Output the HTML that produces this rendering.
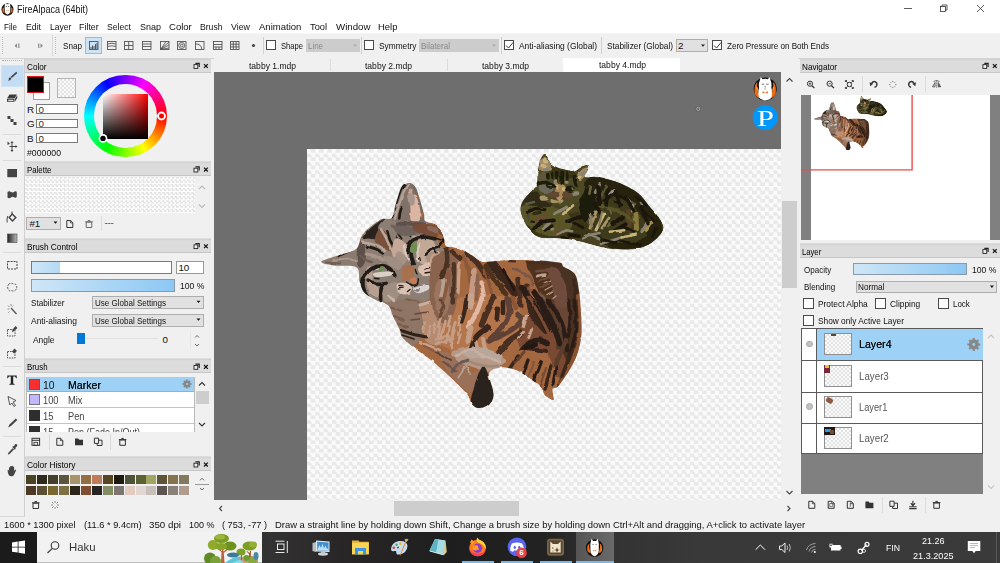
<!DOCTYPE html>
<html><head><meta charset="utf-8"><title>FireAlpaca (64bit)</title>
<style>
html,body{margin:0;padding:0;}
body{width:1000px;height:563px;overflow:hidden;position:relative;background:#f0f0f0;font-family:"Liberation Sans",sans-serif;font-size:9px;color:#000;}
.a{position:absolute;}
.t{position:absolute;white-space:nowrap;line-height:12px;height:12px;font-size:9.800px;letter-spacing:-0.300px;color:#111;}
.hd{position:absolute;height:13px;background:#dcdcdc;border-top:1px solid #dadada;border-bottom:1px solid #c6c6c6;box-sizing:border-box;box-shadow:0 -1.700px 0 0 #d3d3d3;}
.hd span{position:absolute;left:2px;top:0px;line-height:11px;font-size:9.800px;letter-spacing:-0.300px;white-space:nowrap;}
.cb{position:absolute;width:10px;height:10px;border:1px solid #4a4a4a;background:#fff;box-sizing:border-box;}
.inp{position:absolute;background:#fff;border:1px solid #7a7a7a;box-sizing:border-box;}
.dd{position:absolute;background:#e1e1e1;border:1px solid #adadad;box-sizing:border-box;}
.sep{position:absolute;width:1px;background:#d0d0d0;}
svg{position:absolute;overflow:visible;}
.chk{background:conic-gradient(#e2e2e2 25%,#fbfbfb 0 50%,#e2e2e2 0 75%,#fbfbfb 0) 0 0/4px 4px;}
.chk3{background:conic-gradient(#e2e2e2 25%,#fff 0 50%,#e2e2e2 0 75%,#fff 0) 0 0/4.170px 4.170px;}
.chk2{background:conic-gradient(#e9e9e9 25%,#fafafa 0 50%,#e9e9e9 0 75%,#fafafa 0) 0 0/8.330px 8.330px;}
</style></head><body>
<!-- title bar -->
<div class="a" style="left:0;top:0;width:1000px;height:33px;background:#fff"></div>
<svg style="left:1px;top:1.500px" width="13" height="14" viewBox="0 0 13 14"><ellipse cx="6.5" cy="7.5" rx="6" ry="6.2" fill="#1a1a1a"/><path d="M1.5 10 Q1 5 3 6 Q2.5 9 4 11Z M11.5 10 Q12 5 10 6 Q10.5 9 9 11Z" fill="#e8641b"/><path d="M4 2.5 L4.6 .6 L5.6 2.2 L7.4 2.2 L8.4 .6 L9 2.5 Q9.6 4 9.3 7 Q9.6 12 6.5 12.6 Q3.4 12 3.7 7 Q3.4 4 4 2.5Z" fill="#fff"/><circle cx="5.4" cy="4.6" r=".5" fill="#222"/><circle cx="7.6" cy="4.6" r=".5" fill="#222"/><path d="M5.4 8.2 L7.6 9.4 L7.6 8.2 L5.4 9.4Z" fill="#e8641b"/></svg>
<div class="t" style="left:17px;top:3.600px;font-size:10px;letter-spacing:0;transform-origin:0 50%;transform:scaleX(0.900)">FireAlpaca (64bit)</div>
<svg style="left:900px;top:0" width="100" height="18" viewBox="0 0 100 18"><g fill="none" stroke="#333" stroke-width="0.8"><path d="M4 8.5H12"/><rect x="40.5" y="6.5" width="5" height="5"/><path d="M42 6.5V5H47V10H45.5"/><path d="M77 5L84 12M84 5L77 12"/></g></svg>
<!-- menu bar -->
<div id="menu">
<div class="t" style="left:4px;top:20.500px;letter-spacing:0;transform-origin:0 50%;transform:scaleX(0.823)">File</div>
<div class="t" style="left:26px;top:20.500px;letter-spacing:0;transform-origin:0 50%;transform:scaleX(0.888)">Edit</div>
<div class="t" style="left:50px;top:20.500px;letter-spacing:0;transform-origin:0 50%;transform:scaleX(0.873)">Layer</div>
<div class="t" style="left:79px;top:20.500px;letter-spacing:0;transform-origin:0 50%;transform:scaleX(0.909)">Filter</div>
<div class="t" style="left:107px;top:20.500px;letter-spacing:0;transform-origin:0 50%;transform:scaleX(0.881)">Select</div>
<div class="t" style="left:140px;top:20.500px;letter-spacing:0;transform-origin:0 50%;transform:scaleX(0.917)">Snap</div>
<div class="t" style="left:169px;top:20.500px;letter-spacing:0;transform-origin:0 50%;transform:scaleX(0.973)">Color</div>
<div class="t" style="left:200px;top:20.500px;letter-spacing:0;transform-origin:0 50%;transform:scaleX(0.879)">Brush</div>
<div class="t" style="left:231px;top:20.500px;letter-spacing:0;transform-origin:0 50%;transform:scaleX(0.902)">View</div>
<div class="t" style="left:259px;top:20.500px;letter-spacing:0;transform-origin:0 50%;transform:scaleX(0.973)">Animation</div>
<div class="t" style="left:310px;top:20.500px;letter-spacing:0;transform-origin:0 50%;transform:scaleX(0.945)">Tool</div>
<div class="t" style="left:336px;top:20.500px;letter-spacing:0;transform-origin:0 50%;transform:scaleX(0.990)">Window</div>
<div class="t" style="left:378px;top:20.500px;letter-spacing:0;transform-origin:0 50%;transform:scaleX(0.967)">Help</div>
</div>
<!-- toolbar -->
<div class="a" style="left:0;top:33px;width:1000px;height:24px;background:#f0f0f0;border-bottom:1px solid #d6d6d6;border-top:1px solid #f6f6f6;box-sizing:content-box"></div>
<div class="a" style="left:52px;top:35px;width:1px;height:21px;background:#d8d8d8"></div>
<div class="a" style="left:2px;top:37px;width:1px;height:17px;border-left:1px dotted #bbb"></div>
<div class="a" style="left:55px;top:37px;width:1px;height:17px;border-left:1px dotted #bbb"></div>
<svg style="left:0;top:34px" width="520" height="23" viewBox="0 0 520 23">
<g fill="#8a8a8a"><path d="M17 9.5L14.5 11.7L17 14Z M18.2 9.5h1.2v4.5h-1.2z"/><path d="M40.5 9.5L43 11.7L40.5 14Z M38.1 9.5h1.2v4.5h-1.2z"/></g>
<rect x="85.500" y="3.500" width="16" height="16" fill="#cce4f7" stroke="#8cc0ea"/>
<g fill="none" stroke="#555" stroke-width="0.9">
<rect x="89.500" y="7.500" width="8.5" height="8"/>
<rect x="107.500" y="7.500" width="8.500" height="8"/><path d="M107.500 10Q112 8.500 116 10M107.500 12.500Q112 11 116 12.500"/>
<rect x="124.500" y="7.500" width="8.500" height="8"/><path d="M128.700 7.500V15.500M124.500 11.500H133"/>
<rect x="142.500" y="7.500" width="8.500" height="8"/><path d="M142.500 10H151M142.500 12.500H151"/>
<rect x="160.500" y="7.500" width="8.500" height="8"/><path d="M160.500 15.500L169 8M160.500 15.500L169 11M160.500 15.500L166 7.500M160.500 15.500L169 14"/>
<rect x="177.500" y="7.500" width="8.500" height="8"/><circle cx="181.700" cy="11.500" r="3"/><circle cx="181.700" cy="11.500" r="1.300"/>
<rect x="195.500" y="7.500" width="8.500" height="8"/><path d="M195.500 10Q201 9.500 202 15.500"/>
<rect x="213.500" y="7.500" width="8.500" height="8"/><path d="M213.500 10.500H222M213.500 13H222M216 13V15.500M219 13V15.500"/>
<rect x="230.500" y="7.500" width="8.500" height="8"/><path d="M233.300 7.500V15.500M236.100 7.500V15.500M230.500 10.200H239M230.500 12.900H239"/>
</g>
<path d="M91 15V13M92.500 15V11.500M94 15V12M95.500 15V10M97 15V9" stroke="#444" stroke-width="0.9"/>
<circle cx="253.500" cy="11.500" r="1.600" fill="#444"/>
</svg>
<div class="t" style="left:63px;top:40px;letter-spacing:0;transform-origin:0 50%;transform:scaleX(0.830)">Snap</div>
<div class="sep" style="left:263px;top:37px;height:17px"></div>
<div class="cb" style="left:266px;top:40px"></div>
<div class="t" style="left:281px;top:40px;letter-spacing:0;transform-origin:0 50%;transform:scaleX(0.776)">Shape</div>
<div class="dd" style="left:306px;top:39px;width:54px;height:13px;background:#ccc;border-color:#ccc"></div>
<div class="t" style="left:308px;top:40px;color:#8a8a8a;letter-spacing:0;transform-origin:0 50%;transform:scaleX(0.809)">Line</div>
<div class="sep" style="left:361px;top:37px;height:17px"></div>
<div class="cb" style="left:364px;top:40px"></div>
<div class="t" style="left:379px;top:40px;letter-spacing:0;transform-origin:0 50%;transform:scaleX(0.850)">Symmetry</div>
<div class="dd" style="left:419px;top:39px;width:80px;height:13px;background:#ccc;border-color:#ccc"></div>
<div class="t" style="left:421px;top:40px;color:#8a8a8a;letter-spacing:0;transform-origin:0 50%;transform:scaleX(0.819)">Bilateral</div>
<div class="sep" style="left:501px;top:37px;height:17px"></div>
<div class="cb" style="left:504px;top:40px"></div>
<div class="t" style="left:519px;top:40px;letter-spacing:0;transform-origin:0 50%;transform:scaleX(0.858)">Anti-aliasing (Global)</div>
<div class="sep" style="left:601px;top:37px;height:17px"></div>
<div class="t" style="left:607px;top:40px;letter-spacing:0;transform-origin:0 50%;transform:scaleX(0.848)">Stabilizer (Global)</div>
<div class="dd" style="left:676px;top:39px;width:32px;height:13px"></div>
<div class="t" style="left:678px;top:40px">2</div>
<div class="cb" style="left:712px;top:40px"></div>
<div class="t" style="left:727px;top:40px;letter-spacing:0;transform-origin:0 50%;transform:scaleX(0.825)">Zero Pressure on Both Ends</div>
<svg style="left:0;top:34px" width="1000" height="23" viewBox="0 0 1000 23"><g fill="none" stroke="#222" stroke-width="0.9"><path d="M506 11.500L508.500 14L513 8.500"/><path d="M714 11.500L716.500 14L721 8.500"/></g><g fill="#555"><path d="M353 10.500h4l-2 2.200z" fill="#aaa"/><path d="M492 10.500h4l-2 2.200z" fill="#aaa"/><path d="M701 10.500h4l-2 2.200z" fill="#222"/></g></svg>
<!-- left tool column -->
<div class="a" style="left:2px;top:60px;width:20px;height:0;border-top:1px dotted #b4b4b4"></div>
<div class="a" style="left:24px;top:58px;width:1px;height:458px;background:#cfcfcf"></div>
<div class="a" style="left:0;top:515.500px;width:25px;height:1px;background:#d8d8d8"></div>
<div class="a" style="left:1px;top:65px;width:23px;height:22px;background:#c3ddf4;border:1px solid #cde4f7;box-sizing:border-box"></div>
<div class="a" style="left:3px;top:159.500px;width:18px;height:1px;background:#dcdcdc"></div>
<div class="a" style="left:3px;top:133.500px;width:18px;height:1px;background:#dcdcdc"></div>
<div class="a" style="left:3px;top:252px;width:18px;height:1px;background:#dcdcdc"></div>
<div class="a" style="left:3px;top:366px;width:18px;height:1px;background:#dcdcdc"></div>
<div class="a" style="left:3px;top:436px;width:18px;height:1px;background:#dcdcdc"></div>
<svg id="tools" style="left:0;top:0" width="25" height="520" viewBox="0 0 25 520">
<g fill="#444" stroke="none">
<!-- brush -->
<path d="M16.300 71.800L17.300 72.900L11.800 78L10.700 76.800Z"/><path d="M10.300 77.200L11.400 78.400Q10.600 80.600 8 80.700Q9.300 79.300 8.800 78.200Q9.300 77.300 10.300 77.200Z"/>
<!-- eraser -->
<path d="M9.500 94.500H17L14.500 98.500H7Z M7 99H14.500V101.800H7Z M15 98.700L17.300 95.200V98L15 101.500Z" fill="#3c3c3c"/><path d="M8.200 99.800H13.300V100.900H8.200Z" fill="#f0f0f0"/>
<!-- dot tool -->
<path d="M7.500 116h3v3h-3z M10.500 119h3v3h-3z M13.500 122h3v3h-3z"/>
<!-- move -->
<path d="M12 141L13.600 143H12.500V146H15.500V144.9L17.500 146.5L15.500 148.1V147H12.500V150H13.600L12 152L10.400 150H11.500V147H9.500V146H11.500V143H10.400ZM7.500 141.5L10 143.7L7.500 145Z"/>
<!-- fill rect -->
<rect x="7.300" y="169" width="9.700" height="8.200"/>
<!-- bucket -->
<path d="M7.500 192Q9 190.500 11 192Q13 193 14.500 191.500Q16.500 190.500 16.800 192.500V196.500Q16 198.500 14.500 197.500Q12.500 196 11 197.500Q9 199 7.500 197.500Z"/>
<!-- select pen -->
<path d="M12.200 213L16.800 217.600L12.500 222L8.200 217.600Z M12.200 215L10.200 217.600L12.500 220L14.800 217.600Z" fill-rule="evenodd"/><path d="M12 211.500V215M7.800 216Q6.500 219 7.200 222.500" stroke="#444" stroke-width="1" fill="none"/>
<!-- T -->
<path d="M7.300 375.500H16.700V378.200H16Q15.800 376.700 14.600 376.600H13.200V383.300Q13.300 384 14.600 384.100V384.800H9.400V384.100Q10.700 384 10.800 383.300V376.600H9.400Q8.200 376.700 8 378.200H7.300Z" fill="#222"/>
<!-- pen -->
<path d="M15.800 418.500L17.300 420L11 426L8 427.500L9.500 424.500Z"/>
<!-- eyedropper -->
<path d="M15 444.300Q16.300 443.500 17 444.500Q17.700 445.500 16.800 446.500L15.200 448L15.800 448.700L14.800 449.700L12.300 447L13.300 446L13.900 446.600Z M12.600 448.200L14 449.600L9.500 454L7.800 454.800L8.400 452.800Z"/>
<!-- hand -->
<path d="M9 470.500V467.500Q9.600 466.800 10.200 467.500V466.300Q10.900 465.600 11.500 466.300V466Q12.200 465.400 12.800 466V466.800Q13.500 466.200 14.100 466.900V471Q14.700 469.500 15.800 469.500Q16.500 469.800 16 470.600L14.200 474.500Q13.500 476.300 12 476.300H10.800Q9.200 476.300 8.300 474Q7.600 472 7.600 470Q8.300 469.300 9 470.500Z"/>
</g>
<!-- gradient tool -->
<defs><linearGradient id="gt" x1="0" x2="1"><stop offset="0" stop-color="#222"/><stop offset="1" stop-color="#bbb"/></linearGradient></defs>
<rect x="7.500" y="234" width="9.500" height="8.500" fill="url(#gt)" stroke="#444" stroke-width=".6"/>
<g fill="none" stroke="#444" stroke-width="1">
<rect x="7.500" y="261.500" width="9.500" height="7.500" stroke-dasharray="2 1"/>
<path d="M9 284Q7 286 8 289Q9 291.500 11 290.500Q13 291.500 15 290.500Q17.500 289 16.500 286Q16 283.500 13.500 284Q11 282.500 9 284Z" stroke-dasharray="2 1.200" stroke="#555"/>
<path d="M11 308L16.500 314" stroke-width="1.300" stroke="#555"/><path d="M8 305.500L9.500 307M11 304V306M13.500 305.500L12.300 306.800M7.500 309H9.300M9.500 311.500L8.300 312.700" stroke="#777" stroke-width=".8"/>
<rect x="7.500" y="329.500" width="7.500" height="6.500" stroke-dasharray="1.600 1" stroke="#555"/>
<rect x="7.500" y="351.500" width="7.500" height="6.500" stroke-dasharray="1.600 1" stroke="#555"/>
<path d="M8 396.500L16 400.500L13 402L15.500 405.500L14 406.500L11.800 403L9.800 405Z" stroke-width=".9"/>
</g>
<path d="M15.500 326L17.500 328L13.500 331.500L12 332L12.300 330Z" fill="#444"/>
<path d="M14.500 348.500L17 351L14 353.500L12 351.500Z" fill="#444"/>
</svg>
<!-- Color panel -->
<div class="hd" style="left:25px;top:59.500px;width:185.600px"><span style="letter-spacing:0;transform-origin:0 50%;transform:scaleX(0.833)">Color</span></div>
<div class="a" style="left:33px;top:82px;width:17px;height:18px;background:#fff;border:1px solid #a0a0a0;box-sizing:border-box"></div>
<div class="a" style="left:26.500px;top:76px;width:17.500px;height:17px;background:#000;border:1px solid #e81515;box-sizing:border-box"></div>
<div class="a chk" style="left:56.500px;top:78px;width:19.500px;height:20px;border:1px solid #b4b4b4;box-sizing:border-box"></div>
<div class="t" style="left:27px;top:104px">R</div><div class="inp" style="left:36px;top:104.300px;width:42px;height:9.600px"></div><div class="t" style="left:38.500px;top:104px;color:#333">0</div>
<div class="t" style="left:27px;top:118px">G</div><div class="inp" style="left:36px;top:118.800px;width:42px;height:9.600px"></div><div class="t" style="left:38.500px;top:118px;color:#333">0</div>
<div class="t" style="left:27px;top:132.500px">B</div><div class="inp" style="left:36px;top:133.200px;width:42px;height:9.600px"></div><div class="t" style="left:38.500px;top:132.500px;color:#333">0</div>
<div class="t" style="left:27px;top:146.500px;letter-spacing:0;transform-origin:0 50%;transform:scaleX(0.891)">#000000</div>
<div class="a" style="left:84px;top:74.700px;width:82.600px;height:82.600px;border-radius:50%;background:conic-gradient(from 90deg,#f00,#ff0,#0f0,#0ff,#00f,#f0f,#f00)"></div>
<div class="a" style="left:93.700px;top:84.400px;width:63.200px;height:63.200px;border-radius:50%;background:#f0f0f0"></div>
<div class="a" style="left:103px;top:94px;width:44.600px;height:45px;background:linear-gradient(to top,#000,rgba(0,0,0,0)),linear-gradient(to right,#fff,#f00)"></div>
<!-- Palette -->
<div class="hd" style="left:25px;top:163px;width:185.600px"><span style="letter-spacing:0;transform-origin:0 50%;transform:scaleX(0.803)">Palette</span></div>
<div class="a chk3" style="left:25px;top:177.300px;width:170px;height:36px"></div>
<div class="dd" style="left:26.200px;top:216.800px;width:34.500px;height:13px"></div>
<div class="t" style="left:29.500px;top:217.500px">#1</div>
<div class="sep" style="left:101px;top:216px;height:15px;background:#dcdcdc"></div>
<div class="t" style="left:104.500px;top:217px;color:#444">---</div>
<!-- Brush Control -->
<div class="hd" style="left:25px;top:239.700px;width:185.600px"><span style="letter-spacing:0;transform-origin:0 50%;transform:scaleX(0.843)">Brush Control</span></div>
<div class="inp" style="left:31px;top:261px;width:141px;height:13px;border-color:#7a7a7a"><div class="a" style="left:0;top:0;width:28px;height:100%;background:linear-gradient(to right,#cfe6f7,#b4d9f5)"></div></div>
<div class="inp" style="left:176px;top:261.300px;width:28px;height:12.500px;border-color:#9a9a9a"></div>
<div class="t" style="left:178.500px;top:262px">10</div>
<div class="inp" style="left:31px;top:279.200px;width:144px;height:12.400px;border-color:#8a9aa8;background:linear-gradient(to right,#cfe6f7,#8cc8f4)"></div>
<div class="t" style="left:179.500px;top:280px;letter-spacing:0;transform-origin:0 50%;transform:scaleX(0.882)">100 %</div>
<div class="t" style="left:31.300px;top:297px;letter-spacing:0;transform-origin:0 50%;transform:scaleX(0.831)">Stabilizer</div>
<div class="dd" style="left:92px;top:296.400px;width:112px;height:12.500px"></div>
<div class="t" style="left:94.500px;top:296.800px;letter-spacing:0;transform-origin:0 50%;transform:scaleX(0.820)">Use Global Settings</div>
<div class="t" style="left:31.300px;top:314.700px;letter-spacing:0;transform-origin:0 50%;transform:scaleX(0.862)">Anti-aliasing</div>
<div class="dd" style="left:92px;top:314px;width:112px;height:12.500px"></div>
<div class="t" style="left:94.500px;top:314.500px;letter-spacing:0;transform-origin:0 50%;transform:scaleX(0.820)">Use Global Settings</div>
<div class="t" style="left:32.600px;top:333.500px;letter-spacing:0;transform-origin:0 50%;transform:scaleX(0.858)">Angle</div>
<div class="a" style="left:85px;top:337.800px;width:73px;height:1.500px;background:#e2e2e2"></div>
<div class="a" style="left:77px;top:333.200px;width:8px;height:11.200px;background:#0078d7"></div>
<div class="t" style="left:162.600px;top:333.500px">0</div>
<div class="a" style="left:190px;top:331px;width:1px;height:18px;background:#e6e6e6"></div>
<!-- Brush -->
<div class="hd" style="left:25px;top:360.300px;width:185.600px"><span style="letter-spacing:0;transform-origin:0 50%;transform:scaleX(0.801)">Brush</span></div>
<div class="a" style="left:25.500px;top:376.500px;width:169px;height:55.300px;background:#fff;overflow:hidden;border-left:1px solid #b8b8b8;border-right:1px solid #b8b8b8;box-sizing:border-box">
 <div class="a" style="left:0;top:0;width:100%;height:15.400px;background:#9dd1f6;border-bottom:1px solid #8ab4d2;box-sizing:border-box"></div>
 <div class="a" style="left:0;top:30.400px;width:100%;height:1px;background:#c4c4c4"></div>
 <div class="a" style="left:0;top:46.200px;width:100%;height:1px;background:#c4c4c4"></div>
 <div class="a" style="left:2px;top:2.300px;width:11px;height:11px;background:#f83030;border:1px solid #a04040;box-sizing:border-box"></div>
 <div class="a" style="left:2px;top:17.800px;width:11px;height:11px;background:#c2b6ff;border:1px solid #777;box-sizing:border-box"></div>
 <div class="a" style="left:2px;top:33.400px;width:11px;height:11px;background:#2e2e2e"></div>
 <div class="a" style="left:2px;top:49.200px;width:11px;height:11px;background:#2e2e2e"></div>
 <div class="t" style="left:16px;top:3px;font-size:10px;letter-spacing:0;transform-origin:0 50%;transform:scaleX(1.034)">10</div><div class="t" style="left:41.300px;top:3px;font-size:10px;text-shadow:0 0 .4px #000;letter-spacing:0;transform-origin:0 50%;transform:scaleX(1.060)">Marker</div>
 <div class="t" style="left:16px;top:18.500px;font-size:10px;color:#444;letter-spacing:0;transform-origin:0 50%;transform:scaleX(0.929)">100</div><div class="t" style="left:41.300px;top:18.500px;font-size:10px;color:#444;letter-spacing:0;transform-origin:0 50%;transform:scaleX(0.932)">Mix</div>
 <div class="t" style="left:16px;top:34px;font-size:10px;color:#444;letter-spacing:0;transform-origin:0 50%;transform:scaleX(0.944)">15</div><div class="t" style="left:41.300px;top:34px;font-size:10px;color:#444;letter-spacing:0;transform-origin:0 50%;transform:scaleX(0.927)">Pen</div>
 <div class="t" style="left:16px;top:50px;font-size:10px;color:#444;letter-spacing:0;transform-origin:0 50%;transform:scaleX(0.944)">15</div><div class="t" style="left:41.300px;top:50px;font-size:10px;color:#444;letter-spacing:0;transform-origin:0 50%;transform:scaleX(0.899)">Pen (Fade In/Out)</div>
</div>
<div class="a" style="left:195.600px;top:390.500px;width:13.400px;height:13px;background:#cdcdcd"></div>
<div class="sep" style="left:48.500px;top:434px;height:16px;background:#dcdcdc"></div>
<div class="sep" style="left:110.400px;top:434px;height:16px;background:#dcdcdc"></div>
<!-- Color History -->
<div class="hd" style="left:25px;top:458px;width:185.600px"><span style="letter-spacing:0;transform-origin:0 50%;transform:scaleX(0.857)">Color History</span></div>
<div class="a" style="left:26.0px;top:474.6px;width:10px;height:9.600px;background:#4a4424"></div>
<div class="a" style="left:37.0px;top:474.6px;width:10px;height:9.600px;background:#2e2a1e"></div>
<div class="a" style="left:47.9px;top:474.6px;width:10px;height:9.600px;background:#463e2c"></div>
<div class="a" style="left:58.8px;top:474.6px;width:10px;height:9.600px;background:#5c543e"></div>
<div class="a" style="left:69.8px;top:474.6px;width:10px;height:9.600px;background:#a8946a"></div>
<div class="a" style="left:80.8px;top:474.6px;width:10px;height:9.600px;background:#946e44"></div>
<div class="a" style="left:91.7px;top:474.6px;width:10px;height:9.600px;background:#c07c5a"></div>
<div class="a" style="left:102.6px;top:474.6px;width:10px;height:9.600px;background:#574422"></div>
<div class="a" style="left:113.6px;top:474.6px;width:10px;height:9.600px;background:#1e1a12"></div>
<div class="a" style="left:124.5px;top:474.6px;width:10px;height:9.600px;background:#4e5438"></div>
<div class="a" style="left:135.5px;top:474.6px;width:10px;height:9.600px;background:#5c6234"></div>
<div class="a" style="left:146.4px;top:474.6px;width:10px;height:9.600px;background:#a0a660"></div>
<div class="a" style="left:157.4px;top:474.6px;width:10px;height:9.600px;background:#5e5438"></div>
<div class="a" style="left:168.3px;top:474.6px;width:10px;height:9.600px;background:#84744e"></div>
<div class="a" style="left:179.3px;top:474.6px;width:10px;height:9.600px;background:#827a60"></div>
<div class="a" style="left:26.0px;top:485.6px;width:10px;height:9.600px;background:#4c3a26"></div>
<div class="a" style="left:37.0px;top:485.6px;width:10px;height:9.600px;background:#5a5034"></div>
<div class="a" style="left:47.9px;top:485.6px;width:10px;height:9.600px;background:#786830"></div>
<div class="a" style="left:58.8px;top:485.6px;width:10px;height:9.600px;background:#7c7044"></div>
<div class="a" style="left:69.8px;top:485.6px;width:10px;height:9.600px;background:#2c2618"></div>
<div class="a" style="left:80.8px;top:485.6px;width:10px;height:9.600px;background:#804e32"></div>
<div class="a" style="left:91.7px;top:485.6px;width:10px;height:9.600px;background:#282422"></div>
<div class="a" style="left:102.6px;top:485.6px;width:10px;height:9.600px;background:#848c64"></div>
<div class="a" style="left:113.6px;top:485.6px;width:10px;height:9.600px;background:#7e7470"></div>
<div class="a" style="left:124.5px;top:485.6px;width:10px;height:9.600px;background:#e2ccc0"></div>
<div class="a" style="left:135.5px;top:485.6px;width:10px;height:9.600px;background:#e0d6d2"></div>
<div class="a" style="left:146.4px;top:485.6px;width:10px;height:9.600px;background:#c8beba"></div>
<div class="a" style="left:157.4px;top:485.6px;width:10px;height:9.600px;background:#5c5450"></div>
<div class="a" style="left:168.3px;top:485.6px;width:10px;height:9.600px;background:#8a807c"></div>
<div class="a" style="left:179.3px;top:485.6px;width:10px;height:9.600px;background:#b09c8e"></div>
<div class="a" style="left:195px;top:483.600px;width:14px;height:1px;background:#9a9a9a"></div>
<!-- tabs -->
<div class="a" style="left:214px;top:58px;width:584px;height:14px;background:#f0f0f0"></div>
<div class="a" style="left:563px;top:58px;width:117px;height:14px;background:#fff"></div>
<div class="a" style="left:330px;top:59px;width:1px;height:12px;background:#dcdcdc"></div>
<div class="a" style="left:447px;top:59px;width:1px;height:12px;background:#dcdcdc"></div>
<div class="t" style="left:248.500px;top:59.500px;letter-spacing:0;transform-origin:0 50%;transform:scaleX(0.872)">tabby 1.mdp</div>
<div class="t" style="left:365px;top:59.500px;letter-spacing:0;transform-origin:0 50%;transform:scaleX(0.872)">tabby 2.mdp</div>
<div class="t" style="left:481.500px;top:59.500px;letter-spacing:0;transform-origin:0 50%;transform:scaleX(0.872)">tabby 3.mdp</div>
<div class="t" style="left:598.500px;top:59px;letter-spacing:0;transform-origin:0 50%;transform:scaleX(0.872)">tabby 4.mdp</div>
<!-- canvas area -->
<div class="a" style="left:214px;top:72px;width:567px;height:428px;background:#6e6e6e;overflow:hidden">
 <div class="a chk2" style="left:93px;top:77px;width:480px;height:360px;background-position:0 0"></div>
</div>
<!-- scrollbars -->
<div class="a" style="left:781px;top:72px;width:17px;height:428px;background:#f0f0f0"></div>
<div class="a" style="left:781.500px;top:201.400px;width:15.500px;height:87px;background:#cdcdcd"></div>
<div class="a" style="left:214px;top:500px;width:584px;height:17px;background:#f0f0f0"></div>
<div class="a" style="left:394px;top:501px;width:124.500px;height:14.500px;background:#cdcdcd"></div>
<svg style="left:214px;top:72px" width="586" height="446" viewBox="214 72 586 446"><g fill="none" stroke="#444" stroke-width="1.100"><path d="M786.500 81.500L789.500 78.500L792.500 81.500"/><path d="M786.500 491L789.500 494L792.500 491"/><path d="M222 506L219.500 508.500L222 511"/><path d="M787.500 506L790 508.500L787.500 511"/></g>
<circle cx="698.300" cy="108.800" r="1.800" fill="none" stroke="#ddd" stroke-width=".6"/><circle cx="698.300" cy="108.800" r="2.400" fill="none" stroke="#444" stroke-width=".4"/>
</svg>
<!-- status bar -->
<div class="a" style="left:0;top:517px;width:1000px;height:15.500px;background:#f0f0f0"></div>
<div class="t" style="left:3.500px;top:518.500px;letter-spacing:0;transform-origin:0 50%;transform:scaleX(0.944)">1600 * 1300 pixel</div>
<div class="t" style="left:83.500px;top:518.500px;letter-spacing:0;transform-origin:0 50%;transform:scaleX(0.946)">(11.6 * 9.4cm)</div>
<div class="t" style="left:148.500px;top:518.500px;letter-spacing:0;transform-origin:0 50%;transform:scaleX(0.995)">350 dpi</div>
<div class="t" style="left:188.500px;top:518.500px;letter-spacing:0;transform-origin:0 50%;transform:scaleX(0.918)">100 %</div>
<div class="t" style="left:222px;top:518.500px;letter-spacing:0;transform-origin:0 50%;transform:scaleX(0.939)">( 753, -77 )</div>
<div class="t" style="left:274.500px;top:518.500px;letter-spacing:0;transform-origin:0 50%;transform:scaleX(0.962)">Draw a straight line by holding down Shift, Change a brush size by holding down Ctrl+Alt and dragging, A+click to activate layer</div>
<!-- cat artwork -->
<svg style="left:214px;top:72px" width="567" height="428" viewBox="214 72 567 428">
<defs><clipPath id="c1"><path d="M410.0 183.0C412.2 183.3 414.4 185.3 416 188C417.6 190.7 418.7 195.8 420 200C421.3 204.2 423.2 210.6 424 214C424.8 217.4 423.7 219.6 425 221C426.3 222.4 429.9 222.2 432 223C434.1 223.8 436.4 224.6 438 226C439.6 227.4 441 229.8 442 232C443 234.2 443.8 237.8 444.4 240C445 242.2 444.3 244.8 446 246C447.7 247.2 452.1 246.8 455 247.5C457.9 248.2 461.1 249 464 250.4C466.9 251.8 470.2 254.2 473 256C475.8 257.8 478.9 260.7 481.6 261.6C484.3 262.5 484.7 261.9 489.6 261.6C494.5 261.3 504.6 260.2 512 260C519.4 259.8 529.1 260 536 260.3C542.9 260.6 550.9 261.5 555 262C559.1 262.5 560.3 262.5 561.6 263.2C562.9 263.9 561.9 265.3 563.2 266.4C564.5 267.5 568 268.5 570 270C572 271.5 574.5 272.5 576 276C577.5 279.5 578.4 286.6 579.2 292C580 297.4 580.4 303.2 580.8 309.6C581.2 316 581.9 325.9 581.6 332C581.3 338.1 580.3 343.5 579.2 348C578.1 352.5 576.6 356.4 575 360C573.4 363.6 571.3 367 569.4 370.2C567.5 373.4 564.9 377.3 563 380C561.1 382.7 559 385.6 557.3 387.1C555.6 388.6 553.1 387.5 552.5 389.5C551.9 391.5 554.9 398.7 553.7 399.8C552.5 400.9 547.1 398 545.2 396.2C543.3 394.4 543.7 390.9 541.6 388.3C539.5 385.7 536.1 382.8 532 379.9C527.9 377 521 372.2 516.2 370.2C511.4 368.2 505.4 367.6 501.7 367.5C498 367.4 495 368.5 493 369.5C491 370.5 489.4 372 489 373.8C488.6 375.6 489.7 377.4 490.4 380.8C491.1 384.2 493.9 391.2 493.6 395.2C493.3 399.2 491.4 403.6 488.8 405.6C486.2 407.6 480.4 408.4 477.6 408C474.8 407.6 473 405.5 471.2 403.2C469.4 400.9 470 398 466.4 393.6C462.8 389.2 454.2 381.1 448.8 376C443.4 370.9 438.2 366 432.8 361.6C427.4 357.2 420.1 352.6 415.2 348.8C410.3 345 404.9 340.7 402.4 337.6C399.9 334.5 401.1 332.9 399.6 329.6C398.1 326.3 395 320.6 393.2 316.8C391.4 313 390.7 308 388.4 305.6C386.1 303.2 382.6 303.6 378.8 301.6C375 299.6 367.5 296 364.4 292.8C361.3 289.6 360.9 285.7 359.6 281.6C358.3 277.5 360.5 269.8 356.4 267.2C352.3 264.6 339.6 266.5 334 265.6C328.4 264.7 320.4 263.3 321.2 261.6C322 259.9 333.2 257.2 338.8 255.2C344.4 253.2 352.6 252.2 356.4 248.8C360.2 245.4 359 238.7 362.8 234C366.6 229.3 375.8 222.2 380.4 219.6C385 217 389.1 220.7 391.6 218C394.1 215.3 394.3 208.1 396 203C397.7 197.9 399.8 189.2 402 186C404.2 182.8 407.8 182.7 410 183Z"/></clipPath><clipPath id="c2"><path d="M544.4 153.8C545.7 153.3 546.8 155.3 548 157C549.2 158.7 549.2 162.3 551.6 164.2C554 166.1 559.2 168 562.8 169C566.4 170 571.2 170.9 574 170.6C576.8 170.3 577.7 167.9 580 167C582.3 166.1 587.2 164.4 588.4 165C589.6 165.6 588 169.1 587.5 171C587 172.9 583.3 176 585.2 177C587.1 178 594.2 176.1 599.6 177C605 177.9 612.7 180 618.8 182.6C624.9 185.2 633.1 189.3 638 193C642.9 196.7 645.9 202.1 649.2 206C652.5 209.9 656.5 213.9 658.8 217.2C661.1 220.5 663.3 224 663.6 226.8C663.9 229.6 662.7 232 660.4 234.8C658.1 237.6 653.3 242.1 649.2 244.4C645.1 246.7 640.4 248.4 634.8 249.2C629.2 250 619.6 249.6 614 249.2C608.4 248.8 604.7 248 599.6 246.8C594.5 245.6 587.9 243.3 582 242C576.1 240.7 569.2 239.4 562.8 238.8C556.4 238.2 546.9 238.9 542 238C537.1 237.1 535.2 235.8 532.4 233.2C529.6 230.6 526.3 225.6 524.4 222C522.5 218.4 520.7 214.2 520.4 210.8C520.1 207.4 521.1 204.1 522.8 201C524.5 197.9 528.6 194 530.8 191.4C533 188.8 535.2 188.6 536.4 185C537.6 181.4 537.4 173 538 169C538.6 165 539 162.4 540 160C541 157.6 543.1 154.3 544.4 153.8Z"/></clipPath><filter id="rg" x="-5%" y="-5%" width="110%" height="110%"><feTurbulence type="fractalNoise" baseFrequency="0.11" numOctaves="2" seed="4" result="n"/><feDisplacementMap in="SourceGraphic" in2="n" scale="3.2" xChannelSelector="R" yChannelSelector="G"/></filter></defs>
<g id="cats">
<g clip-path="url(#c1)" fill="none" stroke-linecap="round" stroke-linejoin="round"><g filter="url(#rg)">
<path d="M410.0 183.0C412.2 183.3 414.4 185.3 416 188C417.6 190.7 418.7 195.8 420 200C421.3 204.2 423.2 210.6 424 214C424.8 217.4 423.7 219.6 425 221C426.3 222.4 429.9 222.2 432 223C434.1 223.8 436.4 224.6 438 226C439.6 227.4 441 229.8 442 232C443 234.2 443.8 237.8 444.4 240C445 242.2 444.3 244.8 446 246C447.7 247.2 452.1 246.8 455 247.5C457.9 248.2 461.1 249 464 250.4C466.9 251.8 470.2 254.2 473 256C475.8 257.8 478.9 260.7 481.6 261.6C484.3 262.5 484.7 261.9 489.6 261.6C494.5 261.3 504.6 260.2 512 260C519.4 259.8 529.1 260 536 260.3C542.9 260.6 550.9 261.5 555 262C559.1 262.5 560.3 262.5 561.6 263.2C562.9 263.9 561.9 265.3 563.2 266.4C564.5 267.5 568 268.5 570 270C572 271.5 574.5 272.5 576 276C577.5 279.5 578.4 286.6 579.2 292C580 297.4 580.4 303.2 580.8 309.6C581.2 316 581.9 325.9 581.6 332C581.3 338.1 580.3 343.5 579.2 348C578.1 352.5 576.6 356.4 575 360C573.4 363.6 571.3 367 569.4 370.2C567.5 373.4 564.9 377.3 563 380C561.1 382.7 559 385.6 557.3 387.1C555.6 388.6 553.1 387.5 552.5 389.5C551.9 391.5 554.9 398.7 553.7 399.8C552.5 400.9 547.1 398 545.2 396.2C543.3 394.4 543.7 390.9 541.6 388.3C539.5 385.7 536.1 382.8 532 379.9C527.9 377 521 372.2 516.2 370.2C511.4 368.2 505.4 367.6 501.7 367.5C498 367.4 495 368.5 493 369.5C491 370.5 489.4 372 489 373.8C488.6 375.6 489.7 377.4 490.4 380.8C491.1 384.2 493.9 391.2 493.6 395.2C493.3 399.2 491.4 403.6 488.8 405.6C486.2 407.6 480.4 408.4 477.6 408C474.8 407.6 473 405.5 471.2 403.2C469.4 400.9 470 398 466.4 393.6C462.8 389.2 454.2 381.1 448.8 376C443.4 370.9 438.2 366 432.8 361.6C427.4 357.2 420.1 352.6 415.2 348.8C410.3 345 404.9 340.7 402.4 337.6C399.9 334.5 401.1 332.9 399.6 329.6C398.1 326.3 395 320.6 393.2 316.8C391.4 313 390.7 308 388.4 305.6C386.1 303.2 382.6 303.6 378.8 301.6C375 299.6 367.5 296 364.4 292.8C361.3 289.6 360.9 285.7 359.6 281.6C358.3 277.5 360.5 269.8 356.4 267.2C352.3 264.6 339.6 266.5 334 265.6C328.4 264.7 320.4 263.3 321.2 261.6C322 259.9 333.2 257.2 338.8 255.2C344.4 253.2 352.6 252.2 356.4 248.8C360.2 245.4 359 238.7 362.8 234C366.6 229.3 375.8 222.2 380.4 219.6C385 217 389.1 220.7 391.6 218C394.1 215.3 394.3 208.1 396 203C397.7 197.9 399.8 189.2 402 186C404.2 182.8 407.8 182.7 410 183Z" fill="#a4673f"/>
<path d="M391.0 216.0C395.8 209.9 404.4 180.2 410 181C415.6 181.8 420.2 210.6 426 221C431.8 231.4 443.8 239.4 446 246C448.2 252.6 441.6 255 440 262C438.4 269 439.2 283.1 436 290C432.8 296.9 425.8 301.5 420 305C414.2 308.5 404.5 309.9 400 312C395.5 314.1 394.2 319.1 392 318C389.8 316.9 390.8 308.8 386 305C381.2 301.2 367 299.9 362 294C357 288.1 362 273.1 355 268C348 262.9 317.8 265.4 318 262C318.2 258.6 348.6 251.8 356 247C363.4 242.2 360.2 236.5 364 232C367.8 227.5 375.7 221.6 380 219C384.3 216.4 386.2 222.1 391 216Z" fill="#8d7e73"/>
<path d="M386.0 303.0C390.3 300.1 413.3 297.6 420 300C426.7 302.4 428 311.6 428 318C428 324.4 422.9 335.5 420 340C417.1 344.5 413.2 346.6 410 346C406.8 345.4 402.7 340.5 400 336C397.3 331.5 395.2 323.3 393 318C390.8 312.7 381.7 305.9 386 303Z" fill="#8e7465"/>
<path d="M420.0 305.0C423.4 301.8 439.9 296 445 300C450.1 304 452.8 322.8 452 330C451.2 337.2 444.3 343.4 440 345C435.7 346.6 427.6 344 425 340C422.4 336 424.8 325.6 424 320C423.2 314.4 416.6 308.2 420 305Z" fill="#b48a70"/>
<path d="M528.0 262.0C532.6 259.1 554 259.8 562 262C570 264.2 574.8 268.3 578 276C581.2 283.7 581.4 300.6 582 310C582.6 319.4 583.6 325.7 582 335C580.4 344.3 576.2 359.2 572 368C567.8 376.8 560.3 385.7 556 390C551.7 394.3 547.9 396.6 545 395C542.1 393.4 540.1 388.8 538 380C535.9 371.2 531.7 352.8 532 340C532.3 327.2 539.8 309.6 540 300C540.2 290.4 534.9 286.1 533 280C531.1 273.9 523.4 264.9 528 262Z" fill="#50331f"/>
<path d="M534.0 300.0C536.6 293 547.8 292.8 552 296C556.2 299.2 558.4 312 560 320C561.6 328 563.9 341.2 562 346C560.1 350.8 552.2 351 548 350C543.8 349 538.2 348 536 340C533.8 332 531.4 307 534 300Z" fill="#5a3a28"/>
<path d="M566.0 300.0C568.6 295.8 579.4 295.2 582 300C584.6 304.8 583 321 582 330C581 339 578.6 349.3 576 356C573.4 362.7 568.2 373 566 372C563.8 371 562 357.4 562 350C562 342.6 565.4 334 566 326C566.6 318 563.4 304.2 566 300Z" fill="#4a3020"/>
<path d="M556.0 300.0C557.3 297.4 564.1 297.8 566 302C567.9 306.2 568.3 318.3 568 326C567.7 333.7 565.6 347.8 564 350C562.4 352.2 559 345.1 558 340C557 334.9 558.3 324.4 558 318C557.7 311.6 554.7 302.6 556 300Z" fill="#6a4634"/>
<path d="M516.0 322.0C518.6 315 533.6 309.1 540 312C546.4 314.9 554.7 331.4 556 340C557.3 348.6 553.1 363.4 548 366C542.9 368.6 529.1 363 524 356C518.9 349 513.4 329 516 322Z" fill="#7a4c32"/>
<path d="M455.0 300.0C464.6 293 489.6 294.4 500 296C510.4 297.6 517.6 303 520 310C522.4 317 519.8 332 515 340C510.2 348 498.8 357.6 490 360C481.2 362.4 468 358.2 460 355C452 351.8 440.8 348.8 440 340C439.2 331.2 445.4 307 455 300Z" fill="#b3744a"/>
<path d="M452.0 352.0C454.4 349.4 463.9 346 470 346C476.1 346 484.2 349.8 490 352C495.8 354.2 504.4 357.8 506 360C507.6 362.2 502.9 364.1 500 366C497.1 367.9 492.8 372 488 372C483.2 372 475.3 367.6 470 366C464.7 364.4 457.9 364.2 455 362C452.1 359.8 449.6 354.6 452 352Z" fill="#b79886"/>
<path d="M440.0 352.0C441.3 349.8 451.2 354.8 456 358C460.8 361.2 466.2 369.8 470 372C473.8 374.2 479.7 368.8 480 372C480.3 375.2 475.2 389.9 472 392C468.8 394.1 463.8 388.2 460 385C456.2 381.8 451.2 377.3 448 372C444.8 366.7 438.7 354.2 440 352Z" fill="#9a7058"/>
<path d="M483.0 366.0C485.6 364.7 488.2 375.2 490 380C491.8 384.8 494.2 391.8 494 396C493.8 400.2 491.6 403.9 489 406C486.4 408.1 480.9 409.6 478 409C475.1 408.4 471.6 405.4 471 402C470.4 398.6 472.1 393.8 474 388C475.9 382.2 480.4 367.3 483 366Z" fill="#2c221e"/>
<path d="M390.0 220.0C385.2 217 394.3 207.9 396 203C397.7 198.1 399.1 192.5 400.4 189.5C401.7 186.5 402.6 185.2 404 184C405.4 182.8 407.5 181.6 409.3 182C411.1 182.4 413.8 184.3 415.5 186.5C417.2 188.7 418.7 192.6 420 195.8C421.3 199 422.5 202.2 423.5 206.4C424.5 210.6 431.4 219.8 426 222C420.6 224.2 394.8 223 390 220Z" fill="#80726a"/>
<path d="M412.0 184.0C411.8 181.9 414.7 185.1 416 187C417.3 188.9 418.8 193 420 196C421.2 199 422.5 201.8 423.5 206C424.5 210.2 426.9 219.4 426 222C425.1 224.6 419.4 225.5 418 222C416.6 218.5 418 206.1 417 200C416 193.9 412.2 186.1 412 184Z" fill="#74675f"/>
<path d="M410.6 197.0C411.3 194.6 413.7 194.2 415 195C416.3 195.8 417.6 199.1 418.5 202C419.4 204.9 420.4 210.1 420.5 213C420.6 215.9 420.5 218.8 419 220C417.5 221.2 412.4 222.1 411 220.5C409.6 218.9 410.6 213.8 410.5 210C410.4 206.2 409.9 199.4 410.6 197Z" fill="#dbb5a0"/>
<path d="M407.5 194.0C408 192.7 409.9 191.5 411 192C412.1 192.5 414.1 195 414.6 197C415.1 199 414.7 203.3 414 204.6C413.3 205.9 411 205.7 410 205C409 204.3 408.2 201.8 407.8 200C407.4 198.2 407 195.3 407.5 194Z" fill="#a8968c"/>
<path d="M409.0 190.0C409.5 189.5 411.5 189.5 412 190C412.5 190.5 412.5 192.5 412 193C411.5 193.5 409.5 193.5 409 193C408.5 192.5 408.5 190.5 409 190Z" fill="#c9a08a"/>
<path d="M392.0 217.0C392.7 214.6 395.1 206.3 396.5 202C397.9 197.7 399.2 192.8 400.5 190C401.8 187.2 403.9 185.4 404.5 184.5" stroke="#231a17" stroke-width="2.6"/>
<path d="M394.8 219.0C395.5 216.8 397.6 209.3 399 205C400.4 200.7 402.1 195.2 403.5 192C404.9 188.8 407.3 186 408 184.8" stroke="#b5a195" stroke-width="2.3"/>
<path d="M399.2 218.5C399.3 217.6 399.7 214.6 400 213C400.3 211.4 401.1 209.2 401.3 208.5" stroke="#231a17" stroke-width="2.6"/>
<path d="M418.6 191.3 L416.9 197" stroke="#b0693c" stroke-width="1.8"/>
<path d="M424.2 211 L421.8 216.2" stroke="#b0693c" stroke-width="1.5"/>
<path d="M405.2 221.7 L407.2 221.7" stroke="#d9b09c" stroke-width="1.6"/>
<path d="M321.0 261.5C322.7 260 332.2 258.2 338 256C343.8 253.8 353.8 246.2 357 248C360.2 249.8 360.3 264 358 267C355.7 270 347.5 266.7 342.6 266.5C337.7 266.3 331 266.3 327.5 265.5C324 264.7 319.3 263 321 261.5Z" fill="#8a7a70"/>
<path d="M338.5 256.3C339.9 255.7 344.2 253.7 347 252.5C349.8 251.3 354.6 249.1 356 248.5" stroke="#231a17" stroke-width="1.8"/>
<path d="M334.0 261.0C336.2 260.8 344.5 259.5 348 259.5C351.5 259.5 354.7 260.8 356 261" stroke="#a8988c" stroke-width="2"/>
<path d="M326 262.5 L340 263.5" stroke="#6e6058" stroke-width="2"/>
<path d="M332 260.5 L333.5 260.3" stroke="#c07a40" stroke-width="1"/>
<path d="M357.7 246.0C358.7 242.8 361.7 241.4 363 242C364.3 242.6 365.7 246.8 366 250C366.3 253.2 366 259.1 365 262C364 264.9 361.3 268 360 268C358.7 268 357.4 265.5 357 262C356.6 258.5 356.7 249.2 357.7 246Z" fill="#5e4f48"/>
<path d="M362.2 238.1C362.6 236.3 368.4 230.1 372 227C375.6 223.9 383.4 218.7 384.4 218.6C385.4 218.5 378.9 224.1 378.2 226.5C377.5 228.9 380.1 231.6 380 233.6C379.9 235.6 379 238.2 377.3 239C375.6 239.8 371.7 238.6 369.3 238.5C366.9 238.4 361.8 239.9 362.2 238.1Z" fill="#2a201e"/>
<path d="M379.0 229.2C380.8 227.9 384.1 230.4 386 232.8C387.9 235.2 389.7 240.8 391 244C392.3 247.2 394.6 252.2 394 253C393.4 253.8 389.1 250.2 387 249C384.9 247.8 382.8 246.5 380.8 245.2C378.8 243.9 374.9 243.4 374.6 240.8C374.3 238.2 377.2 230.5 379 229.2Z" fill="#7a503a"/>
<path d="M381.0 229.0C381.8 230.4 384.6 235.1 386 238C387.4 240.9 388.9 244.8 390 247C391.1 249.2 392.5 251.2 393 252" stroke="#b9a79b" stroke-width="2.4"/>
<path d="M387.3 231.3C387.7 232.7 389 237.6 390 240C391 242.4 393.1 245.2 393.7 246.2" stroke="#231a17" stroke-width="2.5"/>
<path d="M367.5 246.5C368.9 246.9 373.6 247.9 376 249C378.4 250.1 381.5 252.5 382.6 253.2" stroke="#231a17" stroke-width="3"/>
<path d="M362.2 242.5C363.6 242.7 368.4 243.2 371 243.8C373.6 244.4 376 245 378.2 246C380.4 247 383.9 249.4 385 250" stroke="#b9a79b" stroke-width="2.4"/>
<path d="M366.0 254.0C367.4 254.3 372.1 255 375 256C377.9 257 382.6 259.4 384 260" stroke="#a89588" stroke-width="3"/>
<path d="M360.0 256.0C361 256.6 364.1 259 366 260C367.9 261 371 261.7 372 262" stroke="#6e5e55" stroke-width="2.5"/>
<path d="M398.0 233.5C398.4 234.1 399.8 235.9 400.5 237C401.2 238.1 402.2 239.9 402.5 240.5" stroke="#231a17" stroke-width="1.8"/>
<path d="M396 236 L398 241" stroke="#231a17" stroke-width="1.6"/>
<path d="M409.0 228.0C409.5 228.8 411.2 231.4 412 233C412.8 234.6 413.7 237.2 414 238" stroke="#b9a79b" stroke-width="2.4"/>
<path d="M407.5 231 L410.5 236.5" stroke="#231a17" stroke-width="1.6"/>
<path d="M398.0 224.5C399.9 224.3 405.8 223.4 410 223.5C414.2 223.6 421.8 224.8 424 225" stroke="#5e4f48" stroke-width="4.5"/>
<path d="M394.0 226.0C396.2 224.9 407.8 226 412 227C416.2 228 420.3 230.6 420 232C419.7 233.4 413.5 235.7 410 236C406.5 236.3 400.6 235.6 398 234C395.4 232.4 391.8 227.1 394 226Z" fill="#6e625c"/>
<path d="M392.0 226.0C393.6 226.5 399.4 229 402 229C404.6 229 407 226.5 408 226" stroke="#6e625c" stroke-width="3"/>
<path d="M395.0 239.0C396.9 237.2 401.9 239.2 404 241C406.1 242.8 408 247 408 250C408 253 405.9 258.1 404 260C402.1 261.9 397.9 263.3 396 262C394.1 260.7 392.2 255.7 392 252C391.8 248.3 393.1 240.8 395 239Z" fill="#c4a898"/>
<path d="M396.0 252.0C397 250.1 402.4 252.4 404 254C405.6 255.6 407 260.1 406 262C405 263.9 399.6 267.6 398 266C396.4 264.4 395 253.9 396 252Z" fill="#a89284"/>
<path d="M384.0 256.0C385.3 255 393.1 256.7 396 258C398.9 259.3 401.7 262.1 402 264C402.3 265.9 400.2 270 398 270C395.8 270 390.2 266.2 388 264C385.8 261.8 382.7 257 384 256Z" fill="#a08e82"/>
<path d="M412.0 226.0C412.3 224.4 418.5 224.2 422 224C425.5 223.8 431 224 434 225C437 226 439.5 227.6 441 230C442.5 232.4 444.9 239 443.5 240C442.1 241 435.8 237 432 236C428.2 235 423.2 235.6 420 234C416.8 232.4 411.7 227.6 412 226Z" fill="#7a4e38"/>
<path d="M428.0 226.0C429.6 225.7 436.7 227 438 228C439.3 229 437.6 231.7 436 232C434.4 232.3 429.3 231 428 230C426.7 229 426.4 226.3 428 226Z" fill="#8a6a5a"/>
<path d="M437.0 232.0C438 231.7 442.5 235.6 444 238C445.5 240.4 447.1 245.7 446.5 247C445.9 248.3 441.4 247.1 440 246C438.6 244.9 438.5 242.2 438 240C437.5 237.8 436 232.3 437 232Z" fill="#a06438"/>
<path d="M418.0 241.0C420.4 239.1 429.1 238.6 432 240C434.9 241.4 436.3 246.5 436 250C435.7 253.5 432.6 260.1 430 262C427.4 263.9 422.1 263.6 420 262C417.9 260.4 417.3 255.4 417 252C416.7 248.6 415.6 242.9 418 241Z" fill="#c2a896"/>
<path d="M426.0 256.0C427.1 254.1 432.1 251 434 252C435.9 253 438.3 259.4 438 262C437.7 264.6 433.8 267.7 432 268C430.2 268.3 428 265.9 427 264C426 262.1 424.9 257.9 426 256Z" fill="#a89080"/>
<path d="M407.5 252.6C407.8 251.2 408.5 246.1 409.5 244C410.5 241.9 411.7 240.6 414 239.5C416.3 238.4 420.6 237.1 424 237C427.4 236.9 433.4 238.5 435.2 238.8" stroke="#231a17" stroke-width="3.6"/>
<path d="M411.0 250.0C411.1 251.1 411 254.7 411.5 257C412 259.3 413.6 263.1 414 264.3" stroke="#231a17" stroke-width="3.8"/>
<path d="M409.8 251.0C409.5 249.5 410.9 244.9 412 243.5C413.1 242.1 415.7 241.9 416.5 242.5C417.3 243.1 417.4 245.3 417 247C416.6 248.7 415.2 252.4 414 253C412.8 253.6 410.1 252.5 409.8 251Z" fill="#6e8e52"/>
<path d="M404.0 245.5C404.2 246.7 404.8 250.7 405.5 253C406.2 255.3 408 258.9 408.5 260" stroke="#d9c8bc" stroke-width="2.2"/>
<path d="M419.5 245.0C419.2 246.1 417.7 249.4 417.5 252C417.3 254.6 417.9 259.6 418 261" stroke="#d9c8bc" stroke-width="2.2"/>
<path d="M419.5 257.5 L420.5 260.5" stroke="#231a17" stroke-width="1.2"/>
<path d="M425.6 254.7C426.5 253.9 429 251.2 431 250C433 248.8 436.4 248.8 438.4 247.3C440.4 245.8 442.9 241.9 443.7 240.9" stroke="#231a17" stroke-width="2.6"/>
<path d="M436 238.5 L444 240.5" stroke="#231a17" stroke-width="1.8"/>
<path d="M434 250 L436 253" stroke="#231a17" stroke-width="1.8"/>
<path d="M438 252 L437 262" stroke="#b8a69a" stroke-width="2.5"/>
<path d="M366.0 270.0C366.6 266.5 371 264.5 372 268C373 271.5 372.6 288.5 372 292C371.4 295.5 369 293.5 368 290C367 286.5 365.4 273.5 366 270Z" fill="#b8a090"/>
<path d="M372.0 267.0C372.8 266 377.4 263.7 380 263.5C382.6 263.3 386.1 264.8 388 266C389.9 267.2 392.6 270.7 392 271C391.4 271.3 386.7 268.2 384 268C381.3 267.8 376.9 270.2 375 270C373.1 269.8 371.2 268 372 267Z" fill="#d9c8bc"/>
<path d="M394.7 276.0C393.9 274.9 392 270.7 390 269C388 267.3 385 265.6 382 265.6C379 265.6 374.1 267.1 371.3 268.8C368.5 270.5 365.9 273.7 364.5 276C363.1 278.3 362.9 280.8 362.8 283C362.7 285.2 363.3 288 364 290C364.7 292 366.5 294.6 367 295.5" stroke="#231a17" stroke-width="3.8"/>
<path d="M378.5 268.0C379.3 267.4 382.8 267.1 383.5 267.5C384.2 267.9 383.8 269.9 383 270.5C382.2 271.1 379.2 271.4 378.5 271C377.8 270.6 377.7 268.6 378.5 268Z" fill="#6e8e52"/>
<path d="M374.0 273.0C376.2 272.1 387.3 271.1 390 271.5C392.7 271.9 393.2 274.6 391 275.5C388.8 276.4 378.7 277.4 376 277C373.3 276.6 371.8 273.9 374 273Z" fill="#d9d0c8"/>
<path d="M374.5 278.3 L379 278.8" stroke="#231a17" stroke-width="1.4"/>
<path d="M368.0 280.0C369 280.5 372.1 282.3 374 283C375.9 283.7 377.8 284.3 379.8 284.3C381.8 284.3 385.2 283.4 386.2 283.2" stroke="#231a17" stroke-width="3.4"/>
<path d="M383.0 284.8C382.7 285.6 381.4 287.4 381 290C380.6 292.6 380.5 299.1 380.4 300.8" stroke="#231a17" stroke-width="3.8"/>
<path d="M368.0 283.0C369.3 282 376.4 284.8 378 287C379.6 289.2 379.3 296 378 297C376.7 298 371.6 295.2 370 293C368.4 290.8 366.7 284 368 283Z" fill="#b8a090"/>
<path d="M384.0 288.0C386.1 285.4 393.8 280.7 396 282C398.2 283.3 399.3 292.8 398 296C396.7 299.2 390.4 301.7 388 302C385.6 302.3 383.6 300.2 383 298C382.4 295.8 381.9 290.6 384 288Z" fill="#a08e82"/>
<path d="M388 296 L394 300" stroke="#c8b4a6" stroke-width="2.5"/>
<path d="M402.0 272.0C402 269.8 403 267 404.5 266C406 265 409.9 264.9 411.5 265.5C413.1 266.1 414.3 268 414.5 270C414.7 272 414.1 276.4 412.5 278C410.9 279.6 406.2 281 404.5 280C402.8 279 402 274.2 402 272Z" fill="#a8704e"/>
<path d="M409.5 281.0C409.8 280.1 413.3 278.3 414.5 278.5C415.7 278.7 417.1 281.6 416.8 282.5C416.5 283.4 413.7 284.4 412.5 284.2C411.3 284 409.2 281.9 409.5 281Z" fill="#d07a50"/>
<path d="M406.5 282.0C407.2 282.5 409.3 284.7 411 285C412.7 285.3 415.8 285 417 284C418.2 283 418.3 279.8 418.5 279" stroke="#231a17" stroke-width="1.5"/>
<path d="M415.5 270.5 L417 274" stroke="#231a17" stroke-width="1.5"/>
<path d="M419.0 266.0C420.3 264.5 424.6 262.3 427 262.5C429.4 262.7 433.2 265 434 267C434.8 269 433.6 273.4 432 275C430.4 276.6 426.1 277.5 424 277C421.9 276.5 419.8 273.8 419 272C418.2 270.2 417.7 267.5 419 266Z" fill="#dcbfae"/>
<path d="M424.5 269 L430 267.5" stroke="#231a17" stroke-width="1.3"/>
<path d="M424 273 L432 272" stroke="#231a17" stroke-width="1.3"/>
<path d="M397.0 284.0C398.1 282.4 403.6 282.4 406 283C408.4 283.6 411.7 286.2 412 288C412.3 289.8 410.1 293.2 408 294C405.9 294.8 400.8 294.6 399 293C397.2 291.4 395.9 285.6 397 284Z" fill="#d8c0b2"/>
<path d="M399 285.5 L403 285.8" stroke="#231a17" stroke-width="1.3"/>
<path d="M398.5 289 L404 287.5" stroke="#231a17" stroke-width="1.3"/>
<path d="M407.5 291.5 L410 289.5" stroke="#231a17" stroke-width="1.5"/>
<path d="M414.0 287.0C416.1 285.7 425.6 283.7 428 284C430.4 284.3 430.3 287.6 429 289C427.7 290.4 422.2 292.5 420 293C417.8 293.5 416 293 415 292C414 291 411.9 288.3 414 287Z" fill="#d8d2d2"/>
<path d="M414.0 290.0C414.3 289.4 419.4 287.7 420 288C420.6 288.3 419 291.7 418 292C417 292.3 413.7 290.6 414 290Z" fill="#8a7e7a"/>
<path d="M430.0 258.0C431 254.5 436.4 252.4 438 254C439.6 255.6 440.3 263.8 440 268C439.7 272.2 437.3 278.7 436 280C434.7 281.3 433 279.5 432 276C431 272.5 429 261.5 430 258Z" fill="#c49e88"/>
<path d="M406 299 L418 302" stroke="#7a5a48" stroke-width="2"/>
<path d="M420.0 305.0C422.6 304.2 432.6 302.1 436 300C439.4 297.9 440.2 293.3 441 292" stroke="#c8b0a0" stroke-width="3"/>
<path d="M415 314 L428 312" stroke="#6a4a3a" stroke-width="1.6"/>
<path d="M411 320 L420 319" stroke="#6a4a3a" stroke-width="1.6"/>
<path d="M390 307 L402 311" stroke="#7a5a48" stroke-width="2"/>
<path d="M394 316 L404 320" stroke="#7a5a48" stroke-width="2"/>
<path d="M398 324 L408 327" stroke="#7a5a48" stroke-width="2"/>
<path d="M401.0 330.5C402.8 331.1 407.9 333 412 334C416.1 335 424.2 336.5 426.5 337" stroke="#2e201a" stroke-width="3"/>
<path d="M402 335 L414 339" stroke="#2e201a" stroke-width="1.6"/>
<path d="M423 332 L425 322" stroke="#c49e86" stroke-width="2.2"/>
<path d="M428 336 L430 326" stroke="#c49e86" stroke-width="2.2"/>
<path d="M433 333 L435 323" stroke="#c49e86" stroke-width="2.2"/>
<path d="M438 337 L440 327" stroke="#c49e86" stroke-width="2.2"/>
<path d="M443 332 L445 322" stroke="#c49e86" stroke-width="2.2"/>
<path d="M448 336 L450 326" stroke="#c49e86" stroke-width="2.2"/>
<path d="M453 331 L455 321" stroke="#c49e86" stroke-width="2.2"/>
<path d="M458 335 L460 325" stroke="#c49e86" stroke-width="2.2"/>
<path d="M436.0 340.0C437.9 339.4 445.4 335 448 336C450.6 337 451.4 344.4 452 346" stroke="#c49e86" stroke-width="2.4"/>
<path d="M420 342 L440 350" stroke="#c49e86" stroke-width="2"/>
<path d="M432.0 262.0C434.6 254 442.2 251 446 250C449.8 249 454.1 249.6 456 256C457.9 262.4 458.6 280.1 458 290C457.4 299.9 454.9 312.9 452 318C449.1 323.1 443.5 324.9 440 322C436.5 319.1 431.3 309.6 430 300C428.7 290.4 429.4 270 432 262Z" fill="#8a6450"/>
<path d="M436.0 284.0C437.6 279.5 443.8 277.4 446 280C448.2 282.6 450.3 294.2 450 300C449.7 305.8 446.2 314.7 444 316C441.8 317.3 437.3 313.1 436 308C434.7 302.9 434.4 288.5 436 284Z" fill="#9a7460"/>
<path d="M446.4 249.3C446.5 251.3 447.7 257.6 447 262C446.3 266.4 442.8 274.6 442 277" stroke="#4a3022" stroke-width="4.5"/>
<path d="M451.7 251.4 L460.2 258.8" stroke="#4a2e20" stroke-width="4.5"/>
<path d="M453.8 264.2C453.8 267.4 453.7 277.9 453.5 284C453.3 290.1 452.9 299.5 452.8 302.5" stroke="#4e3426" stroke-width="4.5"/>
<path d="M459.2 264.2 L458.1 291.9" stroke="#c8a088" stroke-width="3.2"/>
<path d="M448.0 270.0C447.7 273.2 446.8 285.2 446 290C445.2 294.8 443.5 298.4 443 300" stroke="#8a5a40" stroke-width="3.5"/>
<path d="M444 280 L441 296" stroke="#b8a090" stroke-width="3.5"/>
<path d="M440.0 300.0C440.6 301 444 303.4 444 306C444 308.6 440.6 314.4 440 316" stroke="#6a4636" stroke-width="3"/>
<path d="M467.7 253.5C469.3 255.2 474.9 260.2 478 264C481.1 267.8 485.5 274.9 486.9 277" stroke="#4a2e20" stroke-width="5.5"/>
<path d="M463.0 256.0C463.8 257.9 466.9 263.8 468 268C469.1 272.2 469.7 279.8 470 282" stroke="#8a5a3a" stroke-width="3.5"/>
<path d="M474 270.6 L470.9 302.5" stroke="#c49a84" stroke-width="5.5"/>
<path d="M477.5 275 L476.5 300" stroke="#8a6450" stroke-width="3.2"/>
<path d="M481.5 282.3 L483.7 295" stroke="#e0b8a4" stroke-width="4.2"/>
<path d="M491.1 262.0C492.8 264.2 498.3 271.2 502 276C505.7 280.8 512.5 289.4 514.5 291.9" stroke="#3a251b" stroke-width="9"/>
<path d="M486.0 266.0C487.9 268.9 494.8 279.5 498 284C501.2 288.5 504.7 292.4 506 294" stroke="#4e301f" stroke-width="5"/>
<path d="M503.0 270.0C504.1 271.9 508.2 278.8 510 282C511.8 285.2 513.4 288.7 514 290" stroke="#231612" stroke-width="2.5"/>
<path d="M484.0 270.0C485 272.6 488.7 281.5 490 286C491.3 290.5 491.7 296.1 492 298" stroke="#8a5636" stroke-width="3"/>
<path d="M518 279.5 L520.8 305.7" stroke="#4a2e20" stroke-width="5.5"/>
<path d="M526.3 285.8 L530 306" stroke="#4a2e20" stroke-width="4.5"/>
<path d="M513.6 268.6C514.9 269.1 519.4 270.4 522 272C524.6 273.6 528.4 276.4 530 278.5C531.6 280.6 531.4 284 531.7 285" stroke="#7a5848" stroke-width="2.6"/>
<path d="M528.0 289.0C529.9 289.8 537.1 292.2 540 294C542.9 295.8 545 299 546 300" stroke="#7a5848" stroke-width="2.2"/>
<path d="M509 261.2 L515 261.4" stroke="#4a2e20" stroke-width="2.2"/>
<path d="M527.0 262.2C529.9 262.4 539.3 263 545 263.5C550.7 264 559.7 265.1 562.5 265.4" stroke="#4a2e20" stroke-width="2.8"/>
<path d="M548.0 270.0C548.8 266.5 555.1 265.4 558 268C560.9 270.6 564.6 279.9 566 286C567.4 292.1 568.6 302.8 567 306C565.4 309.2 558.2 308.6 556 306C553.8 303.4 554.3 295.8 553 290C551.7 284.2 547.2 273.5 548 270Z" fill="#6e4c3c"/>
<path d="M557.0 266.0C556.7 262.8 561 264.4 564 266C567 267.6 573.4 271.8 576 276C578.6 280.2 579 285 580 292C581 299 582.8 313.9 582 320C581.2 326.1 577.2 332.2 575 330C572.8 327.8 569.4 313 568 306C566.6 299 567.8 292.4 566 286C564.2 279.6 557.3 269.2 557 266Z" fill="#4a3022"/>
<path d="M536.2 271.3C537.8 271.2 543.1 270.4 546 270.5C548.9 270.6 553 271.9 554.3 272.2" stroke="#6e4c3c" stroke-width="2.4"/>
<path d="M536.2 276.3C537 276.1 539.5 275.3 541 275C542.5 274.7 544.6 274.6 545.3 274.5" stroke="#c0a090" stroke-width="2.6"/>
<path d="M539.0 281.0C540.3 280.4 544.8 278 547 277C549.2 276 552 275.3 553 275" stroke="#6e4c3c" stroke-width="2"/>
<path d="M544 283 L550 280" stroke="#b89684" stroke-width="1.3"/>
<path d="M540 288 L548 284" stroke="#6e4c3c" stroke-width="2"/>
<path d="M545 290 L552 286" stroke="#b89684" stroke-width="1.3"/>
<path d="M547 294.5 L553 291" stroke="#b89684" stroke-width="1.3"/>
<path d="M553 298.5 L556 296" stroke="#b89684" stroke-width="1.2"/>
<path d="M574.0 280.0C574.6 284.8 577.5 300.4 578 310C578.5 319.6 577.2 335.2 577 340" stroke="#3a271c" stroke-width="3.5"/>
<path d="M568.0 300.0C568.3 303.2 570.3 313 570 320C569.7 327 566.6 340.2 566 344" stroke="#2e1e16" stroke-width="3"/>
<path d="M466.9 296.0C466.6 298.2 465.6 305.7 464.8 309.8C464 313.9 462.1 319.7 461.6 321.6" stroke="#3a251b" stroke-width="4.1"/>
<path d="M471 296 L470 306.6" stroke="#c8a490" stroke-width="6.4"/>
<path d="M481.8 298.0C481 300.4 478.7 308.4 476.5 313C474.3 317.6 469.4 324.7 468 326.9" stroke="#e0b8a4" stroke-width="4.6"/>
<path d="M493.5 298.0C492.3 300.6 487.9 309.7 486 314C484.1 318.3 482.5 323.1 481.8 324.8" stroke="#4a2e20" stroke-width="6.1"/>
<path d="M497.8 308.8 L496.7 319.4" stroke="#3a251b" stroke-width="4.6"/>
<path d="M503 302.4 L503 313" stroke="#3a251b" stroke-width="4.6"/>
<path d="M507.4 299.2C507.7 301.2 510.4 307.6 509.5 312C508.6 316.4 505.2 322.3 502 326.9C498.8 331.5 491.2 338.5 489.2 340.7" stroke="#5e4234" stroke-width="5.9"/>
<path d="M517.0 314.1C517.7 315.1 522.4 317.8 521.2 320.5C520 323.2 514.3 328 509.5 331.1C504.7 334.2 494.3 338.3 491.4 339.7" stroke="#5e4234" stroke-width="5.4"/>
<path d="M488.2 327.4C486.3 328.9 479.2 332.8 476.5 336.5C473.8 340.2 472 348.1 471.1 350.3" stroke="#3a251b" stroke-width="5.4"/>
<path d="M521.2 333.3C519.2 334.7 512 338.6 508.4 341.8C504.8 345 500.3 351.6 498.8 353.5" stroke="#4a2e20" stroke-width="6.7"/>
<path d="M526.5 315.2 L523.3 326.9" stroke="#c8a490" stroke-width="3.3"/>
<path d="M531.8 329 L528.7 337.5" stroke="#c8a490" stroke-width="2.8"/>
<path d="M524 332 L518 338" stroke="#c8a490" stroke-width="2.3"/>
<path d="M471 328 L468 340.7" stroke="#c49e86" stroke-width="5.1"/>
<path d="M482.9 338.6 L485 349.2" stroke="#c49e86" stroke-width="3.8"/>
<path d="M476 342 L478 352" stroke="#c49e86" stroke-width="3.3"/>
<path d="M512 298 L516 308" stroke="#8a5636" stroke-width="4.5"/>
<path d="M529.7 300.0C530.4 302.6 531.4 311.2 534 316C536.6 320.8 544.1 327.8 546 330" stroke="#3a271c" stroke-width="7.7"/>
<path d="M540.0 300.0C541.3 302.9 545.4 313.2 548 318C550.6 322.8 554.7 328.1 556 330" stroke="#2e1e16" stroke-width="6.4"/>
<path d="M552.0 306.0C553.3 309.8 558.4 323 560 330C561.6 337 561.7 346.8 562 350" stroke="#5a3c2c" stroke-width="5.1"/>
<path d="M521.0 352.0C522.4 350.6 527 344.8 530 343C533 341.2 537.1 340.3 540 340.5C542.9 340.7 546.7 343.4 548 344" stroke="#2a1a16" stroke-width="5.8"/>
<path d="M519.0 358.0C521.1 356.7 527.7 351.1 532 350C536.3 348.9 543.8 350.8 546 351" stroke="#3a221a" stroke-width="4.1"/>
<path d="M526 348 L536 345" stroke="#231612" stroke-width="3.8"/>
<path d="M438 327 L440.5 318" stroke="#c49e86" stroke-width="2.6"/>
<path d="M443 331 L445.5 322" stroke="#c49e86" stroke-width="2.6"/>
<path d="M448 326 L450.5 317" stroke="#c49e86" stroke-width="2.6"/>
<path d="M453 330 L455.5 321" stroke="#c49e86" stroke-width="2.6"/>
<path d="M458 325 L460.5 316" stroke="#c49e86" stroke-width="2.6"/>
<path d="M440 339 L442.5 330" stroke="#c49e86" stroke-width="2.6"/>
<path d="M446 343 L448.5 334" stroke="#c49e86" stroke-width="2.6"/>
<path d="M452 339 L454.5 330" stroke="#c49e86" stroke-width="2.6"/>
<path d="M458 343 L460.5 334" stroke="#c49e86" stroke-width="2.6"/>
<path d="M436.0 344.0C437.9 343.4 445.4 339.4 448 340C450.6 340.6 451.4 346.7 452 348" stroke="#c49e86" stroke-width="2.6"/>
<path d="M420 342 L440 350" stroke="#c49e86" stroke-width="2.2"/>
<path d="M424 346 L440 354" stroke="#8a5a48" stroke-width="2"/>
<path d="M522.0 288.0C524.2 291.2 531.8 301.3 536 308C540.2 314.7 546.1 326.5 548 330" stroke="#2a1c14" stroke-width="6"/>
<path d="M534.0 292.0C536.6 296.2 545.8 309.7 550 318C554.2 326.3 558.4 339.8 560 344" stroke="#2a1c14" stroke-width="5.5"/>
<path d="M548.0 300.0C550.2 303.8 559 316 562 324C565 332 566.2 345.8 567 350" stroke="#2a1c14" stroke-width="4.5"/>
<path d="M528.0 296.0C529.9 299.2 536.5 309.6 540 316C543.5 322.4 548.4 332.8 550 336" stroke="#7a4c34" stroke-width="3"/>
<path d="M579.0 296.0C579.2 301.4 581.5 319.8 580.5 330C579.5 340.2 576.1 351.5 573 360C569.9 368.5 562.9 379.3 561 383" stroke="#8a5230" stroke-width="4"/>
<path d="M574.0 300.0C574.3 304.8 576.8 321 576 330C575.2 339 570.1 351.8 569 356" stroke="#2a1c14" stroke-width="3"/>
<path d="M506.0 354.0C507.9 351.4 516.6 350.3 522 350C527.4 349.7 535 351 540 352C545 353 549.8 352.8 553 356C556.2 359.2 559.5 366.6 560 372C560.5 377.4 558.4 386.2 556 390C553.6 393.8 547.9 397 545 396C542.1 395 541.4 387.8 538 384C534.6 380.2 528.5 374.9 524 372C519.5 369.1 512.9 368.9 510 366C507.1 363.1 504.1 356.6 506 354Z" fill="#a4683f"/>
<path d="M548.0 352.0C549 349.1 557.1 348.4 560 350C562.9 351.6 566 357.5 566 362C566 366.5 561.9 377 560 378C558.1 379 555.9 372.2 554 368C552.1 363.8 547 354.9 548 352Z" fill="#7a4a30"/>
<path d="M522 377 L528 360" stroke="#2c1e18" stroke-width="3.4"/>
<path d="M533 383 L541 362" stroke="#2c1e18" stroke-width="3.8"/>
<path d="M545 389 L551 366" stroke="#3a251b" stroke-width="3.4"/>
<path d="M553 384 L557 362" stroke="#2c1e18" stroke-width="3.2"/>
<path d="M510 368 L518 356" stroke="#3a251b" stroke-width="3.4"/>
<path d="M528 378 L534 362" stroke="#8a5636" stroke-width="2.4"/>
<path d="M540 386 L546 368" stroke="#7a4a30" stroke-width="2.2"/>
<path d="M566 340 L556 364" stroke="#5a3c2c" stroke-width="4.5"/>
<path d="M572 350 L562 376" stroke="#3a271c" stroke-width="3.5"/>
<path d="M515 362 L524 352" stroke="#6a4230" stroke-width="3"/>
<path d="M462.0 351.0C463 349.2 471.5 347.2 476 347C480.5 346.8 485.8 348.6 490 350C494.2 351.4 500.7 354.1 502 356C503.3 357.9 500.9 361.7 498 362C495.1 362.3 488.5 358.6 484 358C479.5 357.4 473.5 359.1 470 358C466.5 356.9 461 352.8 462 351Z" fill="#b8a69a"/>
<path d="M456.0 356.0C458.2 355 465.5 350 470 350C474.5 350 479.2 354.1 484 356C488.8 357.9 497.4 361 500 362" stroke="#c8b0a2" stroke-width="2.6"/>
<path d="M470.0 362.0C472.6 362.6 481.5 365.4 486 366C490.5 366.6 496.1 366 498 366" stroke="#a08878" stroke-width="2.4"/>
<path d="M452.0 372.0C453 370.7 455.4 365.9 458 364C460.6 362.1 466.4 360.6 468 360" stroke="#6a5a54" stroke-width="2.8"/>
<path d="M462.0 372.0C462.6 371 464.7 365.7 466 366C467.3 366.3 469.4 372.7 470 374" stroke="#b8a090" stroke-width="1.8"/>
<path d="M458 378 L462 372" stroke="#b8a090" stroke-width="1.6"/>
<path d="M444 362 L456 372" stroke="#6a5048" stroke-width="2"/>
<path d="M436 352 L450 360" stroke="#5a4038" stroke-width="2"/>
</g></g>
<g clip-path="url(#c2)" fill="none" stroke-linecap="round" stroke-linejoin="round"><g filter="url(#rg)">
<path d="M544.4 153.8C545.7 153.3 546.8 155.3 548 157C549.2 158.7 549.2 162.3 551.6 164.2C554 166.1 559.2 168 562.8 169C566.4 170 571.2 170.9 574 170.6C576.8 170.3 577.7 167.9 580 167C582.3 166.1 587.2 164.4 588.4 165C589.6 165.6 588 169.1 587.5 171C587 172.9 583.3 176 585.2 177C587.1 178 594.2 176.1 599.6 177C605 177.9 612.7 180 618.8 182.6C624.9 185.2 633.1 189.3 638 193C642.9 196.7 645.9 202.1 649.2 206C652.5 209.9 656.5 213.9 658.8 217.2C661.1 220.5 663.3 224 663.6 226.8C663.9 229.6 662.7 232 660.4 234.8C658.1 237.6 653.3 242.1 649.2 244.4C645.1 246.7 640.4 248.4 634.8 249.2C629.2 250 619.6 249.6 614 249.2C608.4 248.8 604.7 248 599.6 246.8C594.5 245.6 587.9 243.3 582 242C576.1 240.7 569.2 239.4 562.8 238.8C556.4 238.2 546.9 238.9 542 238C537.1 237.1 535.2 235.8 532.4 233.2C529.6 230.6 526.3 225.6 524.4 222C522.5 218.4 520.7 214.2 520.4 210.8C520.1 207.4 521.1 204.1 522.8 201C524.5 197.9 528.6 194 530.8 191.4C533 188.8 535.2 188.6 536.4 185C537.6 181.4 537.4 173 538 169C538.6 165 539 162.4 540 160C541 157.6 543.1 154.3 544.4 153.8Z" fill="#4a4320"/>
<path d="M590.0 178.0C596.1 175.9 612 180.4 620 183C628 185.6 633.3 187.1 640 194C646.7 200.9 660.4 218 662 226C663.6 234 656.7 240.3 650 244C643.3 247.7 628 249.6 620 249C612 248.4 604.8 245.4 600 240C595.2 234.6 592.9 222 590 215C587.1 208 582 201.9 582 196C582 190.1 583.9 180.1 590 178Z" fill="#28240f"/>
<path d="M596.0 196.0C600.5 193.3 613 195.1 620 198C627 200.9 635.8 207.9 640 214C644.2 220.1 649.2 231.2 646 236C642.8 240.8 627.4 244 620 244C612.6 244 604.5 240.6 600 236C595.5 231.4 592.6 221.4 592 215C591.4 208.6 591.5 198.7 596 196Z" fill="#3e3a1a"/>
<path d="M522.0 200.0C524.9 197.1 533.9 193.8 540 196C546.1 198.2 553.6 211.1 560 214C566.4 216.9 575.2 210.5 580 214C584.8 217.5 593.2 232.2 590 236C586.8 239.8 569 238.3 560 238C551 237.7 540.1 237.8 534 234C527.9 230.2 523.9 219.4 522 214C520.1 208.6 519.1 202.9 522 200Z" fill="#3a3418"/>
<path d="M522.0 206.0C525.4 203.8 538 205 545 206C552 207 561.7 208.8 566 212C570.3 215.2 573.6 222.2 572 226C570.4 229.8 561.8 235 556 236C550.2 237 541.1 234.6 536 232C530.9 229.4 526.2 224.2 524 220C521.8 215.8 518.6 208.2 522 206Z" fill="#5a5426"/>
<path d="M525.0 196.0C526.9 194.1 533.7 191 538 192C542.3 193 550.4 199.6 552 202C553.6 204.4 550.9 206.4 548 207C545.1 207.6 537.5 206.5 534 206C530.5 205.5 527.4 205.6 526 204C524.6 202.4 523.1 197.9 525 196Z" fill="#2e2a16"/>
<path d="M579.0 192.0C580.9 188.5 589 187.8 592 190C595 192.2 597.5 201.8 597.5 206C597.5 210.2 594 213.4 592 216C590 218.6 586.9 222.6 585 222C583.1 221.4 581 216.8 580 212C579 207.2 577.1 195.5 579 192Z" fill="#1e1a10"/>
<path d="M538.0 170.0C538.7 165.5 539.9 162.6 541 160C542.1 157.4 543.4 153.4 545 154C546.6 154.6 548.1 161.6 551 164C553.9 166.4 559.3 167.8 563 169C566.7 170.2 570 172.1 574 171.5C578 170.9 586.2 164 588 165C589.8 166 586.1 173.7 585.5 178C584.9 182.3 585.8 187.8 584 192C582.2 196.2 578.2 201.8 574 204C569.8 206.2 562.8 206.6 558 206C553.2 205.4 547.4 202.9 544 200C540.6 197.1 537.5 192.8 536.5 188C535.5 183.2 537.3 174.5 538 170Z" fill="#4e4822"/>
<path d="M551.3 167.0C552.9 165.9 558.4 168.2 562 169C565.6 169.8 572.1 170.6 574 172C575.9 173.4 577.5 177.4 574 178C570.5 178.6 555.6 177.8 552 176C548.4 174.2 549.7 168.1 551.3 167Z" fill="#3a3418"/>
<path d="M540.5 160.5C541.5 158.5 544.2 156.9 545.9 157.7C547.6 158.5 550.3 163.3 550.9 165.4C551.5 167.5 551.3 170.1 549.5 170.8C547.7 171.5 541 171.6 539.6 170C538.2 168.4 539.5 162.5 540.5 160.5Z" fill="#a08a66"/>
<path d="M543.0 160.0C543.5 159.3 546.2 158.6 547 159C547.8 159.4 548.5 161.8 548 162.5C547.5 163.2 544.8 163.9 544 163.5C543.2 163.1 542.5 160.7 543 160Z" fill="#c8b07a"/>
<path d="M540.5 164.5C540.8 163.9 543.1 163.5 544 164C544.9 164.5 546.3 166.9 546 167.5C545.7 168.1 542.9 168.5 542 168C541.1 167.5 540.2 165.1 540.5 164.5Z" fill="#c8b07a"/>
<path d="M543.0 168.5C543.7 168 547.1 167.7 548 168C548.9 168.3 549.2 170 548.5 170.5C547.8 171 544.4 171.3 543.5 171C542.6 170.7 542.3 169 543 168.5Z" fill="#8a8474"/>
<path d="M576.7 173.5C577.9 171.4 585.5 167 586.8 167.6C588.1 168.2 586 175.1 584.8 177.2C583.6 179.3 580.7 181.4 579.4 180.8C578.1 180.2 575.5 175.6 576.7 173.5Z" fill="#a08a66"/>
<path d="M581.0 172.5C581.6 171.6 584.4 170.4 585 171C585.6 171.6 585.1 175.1 584.5 176C583.9 176.9 581.6 177.1 581 176.5C580.4 175.9 580.4 173.4 581 172.5Z" fill="#8a8474"/>
<path d="M577.5 175.5C578 175.2 581.8 176.4 582 177C582.2 177.6 579.7 179.2 579 179C578.3 178.8 577 175.8 577.5 175.5Z" fill="#c8b07a"/>
<path d="M556.8 172.6 L556.8 182.6" stroke="#1e1a10" stroke-width="3.5"/>
<path d="M562.2 172.6 L562.2 183" stroke="#1e1a10" stroke-width="3.5"/>
<path d="M567.6 173 L567 182" stroke="#1e1a10" stroke-width="2.5"/>
<path d="M552 173 L552.5 179" stroke="#1e1a10" stroke-width="2.2"/>
<path d="M546.0 174.0C546.4 173.1 548.4 172.8 549 173.5C549.6 174.2 549.9 177.6 549.5 178.5C549.1 179.4 547.1 179.7 546.5 179C545.9 178.3 545.6 174.9 546 174Z" fill="#1e1a10"/>
<path d="M538.0 174.0C539.1 172.1 543.7 170.7 545 172C546.3 173.3 547.1 180.1 546 182C544.9 183.9 539.3 185.3 538 184C536.7 182.7 536.9 175.9 538 174Z" fill="#5e5838"/>
<path d="M554.0 180.0C554.6 179.4 557.2 179 557.8 179.5C558.4 180 558.4 182.4 557.8 183C557.2 183.6 554.6 183.5 554 183C553.4 182.5 553.4 180.6 554 180Z" fill="#8a8474"/>
<path d="M565.2 181.0C565.7 180.6 567.7 180.6 568.2 181C568.7 181.4 568.7 183.1 568.2 183.5C567.7 183.9 565.7 183.9 565.2 183.5C564.7 183.1 564.7 181.4 565.2 181Z" fill="#8a8474"/>
<path d="M574.0 177.2C574.2 178 574.6 180.6 575 182C575.4 183.4 576 185.5 576.2 186.2" stroke="#1e1a10" stroke-width="3"/>
<path d="M539.5 185.3C541.3 184.3 550.2 184.8 552.2 186C554.2 187.2 553.8 191.6 552 192.6C550.2 193.6 543 193.2 541 192C539 190.8 537.7 186.3 539.5 185.3Z" fill="#6a6a5a"/>
<path d="M555.0 183.5C556.3 181.5 563.7 184 565 186.2C566.3 188.4 564.4 195.1 563.1 197.1C561.8 199.1 558.1 201.1 556.8 198.9C555.5 196.7 553.7 185.5 555 183.5Z" fill="#a88a58"/>
<path d="M555.5 185.5C555.9 184.9 557.8 184.9 558.2 185.5C558.6 186.1 558.6 188.4 558.2 189C557.8 189.6 555.9 189.6 555.5 189C555.1 188.4 555.1 186.1 555.5 185.5Z" fill="#c8b07a"/>
<path d="M562.2 187.5C562.6 187 564.6 187 565 187.5C565.4 188 565.4 190 565 190.5C564.6 191 562.6 191 562.2 190.5C561.8 190 561.8 188 562.2 187.5Z" fill="#c8b07a"/>
<path d="M536.4 184.0C537.9 183.7 543.1 181.8 545.9 182.2C548.7 182.6 552.7 185.6 554 186.2" stroke="#1e1a10" stroke-width="3"/>
<path d="M547.5 183.8C548.3 183.2 552 183.5 553 184C554 184.5 554.3 186.6 553.5 187.2C552.7 187.8 549 188 548 187.5C547 187 546.7 184.4 547.5 183.8Z" fill="#1e1a10"/>
<path d="M549.5 185.5 L551.5 185.7" stroke="#5a6a4a" stroke-width="1.2"/>
<path d="M566.5 186.5C567.4 185.6 570.7 185.5 572 186C573.3 186.5 574.7 188.6 574.5 189.5C574.3 190.4 572.3 191.5 571 191.8C569.7 192.1 567.2 192.3 566.5 191.5C565.8 190.7 565.6 187.4 566.5 186.5Z" fill="#1e1a10"/>
<path d="M572 188 L573 189.5" stroke="#6a7a3a" stroke-width="1.6"/>
<path d="M572.5 192.0C573.4 191.4 577.5 191 578.5 191.5C579.5 192 579.4 194.4 578.5 195C577.6 195.6 574 196 573 195.5C572 195 571.6 192.6 572.5 192Z" fill="#8a8474"/>
<path d="M549.5 191.7C550.8 191.1 557.2 191.6 558.6 192.5C560 193.4 559.3 196.5 558 197.1C556.7 197.7 551.9 197.4 550.5 196.5C549.1 195.6 548.2 192.3 549.5 191.7Z" fill="#5e4630"/>
<path d="M563.0 192.0C564.4 191.2 570.7 191.5 572 192.5C573.3 193.5 572.4 197.2 571 198C569.6 198.8 564.8 198.5 563.5 197.5C562.2 196.5 561.6 192.8 563 192Z" fill="#5e4630"/>
<path d="M557.5 198.0C557.9 197.5 561.6 197.3 562 197.8C562.4 198.3 560.4 201 559.7 201C559 201 557.1 198.5 557.5 198Z" fill="#c88a70"/>
<path d="M540.0 196.2C541 195.5 545.7 195.4 547 196C548.3 196.6 549 199.3 548 200C547 200.7 542.3 201.1 541 200.5C539.7 199.9 539 196.9 540 196.2Z" fill="#a8946a"/>
<path d="M551.0 199.0C551.8 198.6 555.1 200.4 557 200.5C558.9 200.6 562.2 199 563 199.5C563.8 200 563.8 202.9 562 203.5C560.2 204.1 553.8 203.7 552 203C550.2 202.3 550.2 199.4 551 199Z" fill="#a8946a"/>
<path d="M556 203 L561 203" stroke="#6a6430" stroke-width="1.2"/>
<path d="M599.6 183.6 L595.2 192.4" stroke="#8a8474" stroke-width="3"/>
<path d="M590.8 186.6 L589.4 193.8" stroke="#6a6440" stroke-width="2.5"/>
<path d="M614 190.2 L609.7 195.3" stroke="#9a9484" stroke-width="2.4"/>
<path d="M606 186 L601 197" stroke="#5a5434" stroke-width="2.8"/>
<path d="M604 201 L612 195" stroke="#1a160c" stroke-width="3"/>
<path d="M620 196 L627 200" stroke="#1a160c" stroke-width="3"/>
<path d="M614 202 L622 205" stroke="#1a160c" stroke-width="2.8"/>
<path d="M628 199 L634 204" stroke="#5a5434" stroke-width="2.6"/>
<path d="M628.7 199.8 L630 201.5" stroke="#8a8474" stroke-width="2.2"/>
<path d="M639.6 202.5 L641 204.5" stroke="#8a8474" stroke-width="2"/>
<path d="M645.4 217.5 L646.2 218.5" stroke="#9a9484" stroke-width="1.8"/>
<path d="M633 205.5 L631.6 212" stroke="#9a9484" stroke-width="3"/>
<path d="M628.5 212 L628.8 225" stroke="#5a4028" stroke-width="5.5"/>
<path d="M636 215 L636.5 229" stroke="#8a7a3a" stroke-width="5"/>
<path d="M647.6 223 L641.8 231.7" stroke="#8a8474" stroke-width="3"/>
<path d="M652 222.2 L646.1 230.2" stroke="#a8904a" stroke-width="3.2"/>
<path d="M656 228 L652 238" stroke="#1a160c" stroke-width="2.8"/>
<path d="M596 204 L600 213" stroke="#1a160c" stroke-width="3.2"/>
<path d="M606 206 L611 212" stroke="#6a6440" stroke-width="2.6"/>
<path d="M600 206 L618 210" stroke="#5a5428" stroke-width="3"/>
<path d="M618 210 L634 222" stroke="#5a5428" stroke-width="3"/>
<path d="M590 228 L596 212" stroke="#a8946a" stroke-width="3"/>
<path d="M596 230 L604 214" stroke="#c8b47a" stroke-width="3"/>
<path d="M602 228 L609 218" stroke="#a8946a" stroke-width="2.8"/>
<path d="M592 226 L590 214" stroke="#8a8060" stroke-width="2.6"/>
<path d="M599 226 L602 212" stroke="#8a8060" stroke-width="2"/>
<path d="M608 226 L616 220" stroke="#6a6440" stroke-width="2.4"/>
<path d="M612 224 L622 217" stroke="#1a160c" stroke-width="3.6"/>
<path d="M614 231 L626 224" stroke="#1a160c" stroke-width="3.2"/>
<path d="M609.7 231.7 L624.3 230.2" stroke="#c8b47a" stroke-width="2.4"/>
<path d="M585 236 L599.6 233" stroke="#8a8474" stroke-width="2.4"/>
<path d="M601 244 L621.4 237.5" stroke="#8a8474" stroke-width="2.6"/>
<path d="M621.4 237.5 L636 234.6" stroke="#c8b47a" stroke-width="2.4"/>
<path d="M583 238.5 L588.5 234" stroke="#8a8474" stroke-width="2.2"/>
<path d="M588.5 234 L599.3 238.5" stroke="#8a8474" stroke-width="2.2"/>
<path d="M620 241 L640 245" stroke="#1a160c" stroke-width="3.2"/>
<path d="M604 240 L616 243" stroke="#1a160c" stroke-width="2.6"/>
<path d="M555 213.6 L566.7 207.2" stroke="#8a8474" stroke-width="3.2"/>
<path d="M563.1 214 L573 205.4" stroke="#c8b47a" stroke-width="2.6"/>
<path d="M536 221.3 L545.9 215.8" stroke="#6a4a34" stroke-width="3.2"/>
<path d="M543.2 228.5 L549.5 223" stroke="#8a8474" stroke-width="3"/>
<path d="M545 231.2 L552.2 225.8" stroke="#1a160c" stroke-width="3"/>
<path d="M551.5 229.5 L553 229" stroke="#8a8474" stroke-width="2.4"/>
<path d="M556.8 234 L566.7 230.3" stroke="#8a8474" stroke-width="2.6"/>
<path d="M566.7 230.3 L572.2 231.2" stroke="#8a8474" stroke-width="2.4"/>
<path d="M554 234.5 L563.1 229" stroke="#6a4a34" stroke-width="2"/>
<path d="M561 237.6 L567 237.6" stroke="#1a160c" stroke-width="2.6"/>
<path d="M569 235 L579 236" stroke="#1a160c" stroke-width="3.6"/>
<path d="M574 223 L583 227.6" stroke="#1a160c" stroke-width="3"/>
<path d="M526 204 L534 202" stroke="#5a5a4a" stroke-width="2.6"/>
<path d="M527 214 L529 219" stroke="#4a4a3a" stroke-width="2.4"/>
<path d="M531.5 221.5 L534 222" stroke="#1a160c" stroke-width="1.8"/>
<path d="M598 186 L600 204" stroke="#1a160c" stroke-width="4"/>
<path d="M608 189 L606 206" stroke="#1a160c" stroke-width="3.5"/>
<path d="M616 192 L620 206" stroke="#1a160c" stroke-width="3.5"/>
<path d="M626 197 L634 212" stroke="#1a160c" stroke-width="3.5"/>
<path d="M641 207 L648 224" stroke="#1a160c" stroke-width="3"/>
<path d="M622 226 L634 232" stroke="#1a160c" stroke-width="3"/>
<path d="M526.9 211.8C528.3 211.3 533 208.9 535.9 208.6C538.8 208.3 543.5 209.7 545 209.9" stroke="#1a160c" stroke-width="3.2"/>
<path d="M534 213.5 L540 212.5" stroke="#2e2a16" stroke-width="3"/>
<path d="M534.1 229.4C535.3 228.2 538.2 223.6 541.4 222.2C544.6 220.8 552 220.7 554 220.4" stroke="#1a160c" stroke-width="3.6"/>
<path d="M566.7 221.3C568 220.9 572.6 219.2 574.9 218.6C577.2 218 580.2 217.8 581.2 217.6" stroke="#1a160c" stroke-width="3.2"/>
<path d="M640.0 208.0C641.3 209 645.8 211.8 648 214C650.2 216.2 653 220.7 654 222" stroke="#1a160c" stroke-width="2.2"/>
<path d="M636 196 L646 206" stroke="#1a160c" stroke-width="2.6"/>
</g></g>
</g>
</svg>
<!-- Navigator -->
<div class="hd" style="left:800.300px;top:59.500px;width:199.700px"><span style="letter-spacing:0;transform-origin:0 50%;transform:scaleX(0.835)">Navigator</span></div>
<div class="sep" style="left:861.500px;top:76px;height:16px;background:#dcdcdc"></div>
<div class="sep" style="left:924.500px;top:76px;height:16px;background:#dcdcdc"></div>
<div class="a" id="nav" style="left:801px;top:95px;width:199px;height:145px;background:#808080;overflow:hidden">
 <div class="a" style="left:9.800px;top:0;width:179px;height:145px;background:#fff"></div>
 <svg style="left:0;top:0" width="199" height="145" viewBox="801 95 199 145"><g transform="translate(810.800 94.900) scale(0.213700) translate(-307 -149)"><use href="#cats"/></g>
 <path d="M800 169.900H912.100V94" fill="none" stroke="#f04a4a" stroke-width="1.400"/></svg>
</div>
<!-- Layer -->
<div class="hd" style="left:800.300px;top:244.500px;width:199.700px"><span style="letter-spacing:0;transform-origin:0 50%;transform:scaleX(0.783)">Layer</span></div>
<div class="t" style="left:803.800px;top:263.500px;letter-spacing:0;transform-origin:0 50%;transform:scaleX(0.822)">Opacity</div>
<div class="inp" style="left:853.300px;top:262.800px;width:114px;height:12.400px;border-color:#8a9aa8;background:linear-gradient(to right,#cfe6f7,#8cc8f4)"></div>
<div class="t" style="left:972.300px;top:263.500px;letter-spacing:0;transform-origin:0 50%;transform:scaleX(0.882)">100 %</div>
<div class="t" style="left:803.800px;top:280.800px;letter-spacing:0;transform-origin:0 50%;transform:scaleX(0.818)">Blending</div>
<div class="dd" style="left:855.500px;top:280.600px;width:141.500px;height:12.400px"></div>
<div class="t" style="left:857.800px;top:280.800px;letter-spacing:0;transform-origin:0 50%;transform:scaleX(0.836)">Normal</div>
<div class="cb" style="left:803.300px;top:298.300px;width:10.600px;height:10.600px"></div><div class="t" style="left:817.900px;top:297.800px;letter-spacing:0;transform-origin:0 50%;transform:scaleX(0.854)">Protect Alpha</div>
<div class="cb" style="left:875.200px;top:298.300px;width:10.600px;height:10.600px"></div><div class="t" style="left:889.700px;top:297.800px;letter-spacing:0;transform-origin:0 50%;transform:scaleX(0.853)">Clipping</div>
<div class="cb" style="left:938.100px;top:298.300px;width:10.600px;height:10.600px"></div><div class="t" style="left:953.100px;top:297.800px;letter-spacing:0;transform-origin:0 50%;transform:scaleX(0.811)">Lock</div>
<div class="cb" style="left:803.300px;top:315.300px;width:10.600px;height:10.600px"></div><div class="t" style="left:817.900px;top:314.500px;letter-spacing:0;transform-origin:0 50%;transform:scaleX(0.849)">Show only Active Layer</div>
<div class="a" style="left:801.400px;top:328.400px;width:181.700px;height:165.200px;background:#808080"></div>
<div class="a" id="layers" style="left:801.400px;top:328.400px;width:181.700px;height:125.600px;background:#fff;border:1px solid #5a5a5a;box-sizing:border-box">
 <div class="a" style="left:14.400px;top:0;width:166.300px;height:31px;background:#9dd1f6"></div>
 <div class="a" style="left:13.900px;top:0;width:1px;height:100%;background:#5a5a5a"></div>
 <div class="a" style="left:0;top:30.700px;width:100%;height:1px;background:#5a5a5a"></div>
 <div class="a" style="left:0;top:62.200px;width:100%;height:1px;background:#5a5a5a"></div>
 <div class="a" style="left:0;top:93.200px;width:100%;height:1px;background:#5a5a5a"></div>
 <div class="a" style="left:3.600px;top:11.400px;width:6.600px;height:6.600px;border-radius:50%;background:#c2c2c2;border:.500px solid #aaa;box-sizing:border-box"></div>
 <div class="a" style="left:3.600px;top:73.900px;width:6.600px;height:6.600px;border-radius:50%;background:#c2c2c2;border:.500px solid #aaa;box-sizing:border-box"></div>
 <div class="a chk" style="left:21.600px;top:3.800px;width:28px;height:22.200px;border:1px solid #909090;box-sizing:border-box"></div>
 <div class="a chk" style="left:21.600px;top:35.200px;width:28px;height:22.200px;border:1px solid #909090;box-sizing:border-box"></div>
 <div class="a chk" style="left:21.600px;top:66.400px;width:28px;height:22.200px;border:1px solid #909090;box-sizing:border-box"></div>
 <div class="a chk" style="left:21.600px;top:97.800px;width:28px;height:22.200px;border:1px solid #909090;box-sizing:border-box"></div>
 <div class="a" style="left:29px;top:4.500px;width:5px;height:2px;background:#5a4a2a"></div>
 <div class="a" style="left:21.600px;top:35.200px;width:6.400px;height:8.400px;background:#7a2638"></div><div class="a" style="left:22.600px;top:35.200px;width:4px;height:3px;background:#e8c23a"></div>
 <div class="a" style="left:23.500px;top:68.800px;width:7px;height:5px;background:#8a5a42;border-radius:2px;transform:rotate(30deg)"></div>
 <div class="a" style="left:21.600px;top:97.800px;width:11px;height:8px;background:#1e1a1c"></div><div class="a" style="left:22.600px;top:99.500px;width:6px;height:3px;background:#2e9ae0"></div><div class="a" style="left:28px;top:100.500px;width:4px;height:4px;background:#7a4a2a"></div>
 <div class="t" style="left:57px;top:8.800px;font-size:10.500px;text-shadow:0 0 .3px #000;letter-spacing:0;transform-origin:0 50%;transform:scaleX(1.015)">Layer4</div>
 <div class="t" style="left:57px;top:40.200px;font-size:10.500px;color:#555;letter-spacing:0;transform-origin:0 50%;transform:scaleX(0.928)">Layer3</div>
 <div class="t" style="left:57px;top:71.500px;font-size:10.500px;color:#555;letter-spacing:0;transform-origin:0 50%;transform:scaleX(0.881)">Layer1</div>
 <div class="t" style="left:57px;top:102.700px;font-size:10.500px;color:#555;letter-spacing:0;transform-origin:0 50%;transform:scaleX(0.928)">Layer2</div>
</div>
<div class="sep" style="left:881.700px;top:497px;height:16px;background:#dcdcdc"></div>
<div class="sep" style="left:925.100px;top:497px;height:16px;background:#dcdcdc"></div>
<!-- taskbar -->
<div class="a" style="left:0;top:532px;width:1000px;height:31px;background:linear-gradient(to right,#323232 0,#323232 262px,#343333 270px,#282626 340px,#1f1e1e 450px,#232222 540px,#333 615px,#393939 700px,#3a3a3a 1000px)"></div>
<div class="a" style="left:0;top:532px;width:37.400px;height:31px;background:#1c1b1b"></div>
<div class="a" style="left:37.400px;top:532px;width:225px;height:31px;background:#f2f2f2;border-bottom:1px solid #bdbdbd;box-sizing:border-box"></div>
<div class="a" style="left:576.300px;top:532px;width:37.700px;height:31px;background:linear-gradient(to right,#555,#6a6a6a)"></div>
<div class="a" style="left:461.900px;top:561px;width:32px;height:2px;background:#76b9ed"></div>
<div class="a" style="left:501px;top:561px;width:32px;height:2px;background:#76b9ed"></div>
<div class="a" style="left:540px;top:561px;width:32px;height:2px;background:#76b9ed"></div>
<div class="a" style="left:576.300px;top:561px;width:37.700px;height:2px;background:#76b9ed"></div>
<div class="a" style="left:996px;top:532px;width:1px;height:31px;background:#5a5a5a"></div>
<div class="t" style="left:69px;top:541px;font-size:11.500px;line-height:13px;height:13px;color:#333;letter-spacing:0;transform-origin:0 50%;transform:scaleX(0.987)">Haku</div>
<div class="t" style="left:886.300px;top:542px;font-size:9.800px;color:#fff;letter-spacing:0;transform-origin:0 50%;transform:scaleX(0.887)">FIN</div>
<div class="t" style="left:921.500px;top:535px;font-size:9.800px;color:#fff;letter-spacing:0;transform-origin:0 50%;transform:scaleX(0.917)">21.26</div>
<div class="t" style="left:912.500px;top:549.500px;font-size:9.800px;color:#fff;letter-spacing:0;transform-origin:0 50%;transform:scaleX(0.931)">21.3.2025</div>
<svg id="tb" style="left:0;top:532px" width="1000" height="31" viewBox="0 532 1000 31">
<!-- windows logo -->
<path d="M12 542.400L17.700 541.600V546.700H12Z M18.500 541.500L25 540.500V546.700H18.500Z M12 547.500H17.700V552.600L12 551.800Z M18.500 547.500H25V553.700L18.500 552.700Z" fill="#fff"/>
<!-- search -->
<circle cx="55" cy="545.500" r="3.800" fill="none" stroke="#333" stroke-width="1.100"/><path d="M52.300 548.300L47.500 553" stroke="#333" stroke-width="1.100"/>
<!-- trees -->
<g>
<path d="M225 563Q240 550 255 563Z" fill="#5cc6d6"/><path d="M232 563Q244 556 250 563Z" fill="#8adce6"/>
<path d="M238 558Q252 554 258 558V563H244Z" fill="#c89a7a"/>
<path d="M221 563L221.500 552L217 548.500L218 548L222 551L222.300 546L223.300 546L223.500 551.500L228 548L228.600 549L223.800 553L224.500 563Z" fill="#b8623a"/>
<path d="M249 563V554L246.500 551.500L247 551L249.500 553L250 551H251L250.500 563Z" fill="#a85a34"/>
<path d="M241 560V555H242V560Z" fill="#a85a34"/>
<ellipse cx="221.500" cy="538.500" rx="7.500" ry="4.500" fill="#7c9c22"/><ellipse cx="213" cy="545" rx="5.200" ry="5" fill="#90aa2c"/><ellipse cx="230" cy="546" rx="6.500" ry="4.500" fill="#6e9220"/><ellipse cx="221" cy="546.500" rx="6" ry="3.500" fill="#86a428"/><ellipse cx="220" cy="537" rx="5" ry="2.500" fill="#9cb83a"/>
<ellipse cx="249.500" cy="546" rx="7" ry="4.500" fill="#7c9c22"/><ellipse cx="253" cy="544.500" rx="4" ry="3" fill="#94b034"/><ellipse cx="241" cy="552" rx="4.500" ry="3.500" fill="#7ea024"/>
<ellipse cx="210" cy="558.500" rx="6" ry="6" fill="#5e8a24"/><ellipse cx="215.500" cy="561" rx="5.500" ry="5" fill="#7aa238"/><ellipse cx="233" cy="555" rx="6" ry="2.500" fill="#3a7a9a"/><ellipse cx="252.500" cy="560.500" rx="4.500" ry="4" fill="#88aa3c"/><ellipse cx="246.500" cy="558" rx="3" ry="3" fill="#6e9a2c"/><ellipse cx="256" cy="556" rx="2.500" ry="4" fill="#4a8aa8"/>
</g>
<!-- task view -->
<g fill="none" stroke="#fff" stroke-width=".9"><rect x="277.500" y="544" width="6.500" height="5.600"/><path d="M275.500 541.200H284.500M275.500 552.500H284.500M287.300 541V553"/></g>
<!-- perfmon -->
<g><path d="M316 540.500L329.500 541.500V552L316 551.500Z" fill="#dfe6ea"/><path d="M317.200 541.800L328.500 542.600V550.800L317.200 550.400Z" fill="#3f8ed0"/><path d="M317.500 549.500L319.500 545L321 548L322.500 543.500L324 548.500L325.500 545.500L327 549L328.300 548V550.700L317.500 550.300Z" fill="#bfe0f5"/><path d="M312.500 543L316 542V552L312.500 551Z" fill="#b8bec2"/><ellipse cx="323" cy="554" rx="5" ry="1.700" fill="#d4d8da"/><path d="M321 551.500H325V554H321Z" fill="#c4c8ca"/></g>
<!-- explorer -->
<g><path d="M352 540.500H358.500L359.500 541.800H368.800V554.300H352Z" fill="#e8b030"/><path d="M352 542.700H368.800V554.300H352Z" fill="#f8d458"/><path d="M355 548H366V554.300H355Z" fill="#3a96e4"/><path d="M358 551H363V554.300H358Z" fill="#f8d458"/></g>
<!-- paint -->
<g><path d="M391 549Q391.500 542.500 399 541Q407 540.500 407.500 546Q407 553 399.500 554.500Q396 555 396.300 552.300Q396.500 550.500 394.500 551Q391 552 391 549Z" fill="#c4dcf0"/><circle cx="393.800" cy="547.800" r="1.300" fill="#e04838"/><circle cx="396.500" cy="544.800" r="1.300" fill="#58b848"/><circle cx="400.300" cy="543.600" r="1.300" fill="#f0b430"/><path d="M397 547L398.500 546.500L399 548L397.500 548.500Z" fill="#444"/><path d="M405.500 541L406.500 541.500L400.500 555.500L399.800 555.200Z" fill="#e08a30"/><path d="M404.500 539.500Q406.500 538 408.500 539.500L406.700 542L405.300 541.500Z" fill="#d8a868"/></g>
<!-- notepad -->
<g><path d="M435.500 539L445.500 540.500L446.800 552L444 555L430 551Z" fill="#d8c88a"/><path d="M435 539L445 540.500L443.500 554.500L429.500 550.500Z" fill="#a4dce4"/><path d="M435 539L438.500 539.500L436 552.400L429.500 550.500Z" fill="#5cb4c4"/><path d="M429.500 550.500L443.500 554.500L443.300 555.300L429.800 551.500Z" fill="#e8f4f8"/></g>
<!-- firefox -->
<g><circle cx="477.500" cy="548" r="8.300" fill="#ff7a1c"/><path d="M477 537.500Q479 540 482 541Q486.500 544 485.800 549.500Q483 543 477.500 542.500Q476 540 477 537.500Z" fill="#ffd23a"/><path d="M470 542Q471 540.500 471.500 539.500Q473 541 475 541.500L472 545Z" fill="#ff9a24"/><circle cx="477.500" cy="548.200" r="4.600" fill="#8a3ad8"/><path d="M472.500 546.500Q475 544.500 478.500 546Q477 547.500 479.500 549Q476 551.500 472.800 549.500Z" fill="#ff9a24"/><path d="M469.300 549Q471 556.500 478 556.300Q484 556 485.700 550Q482.500 554 477.500 553.500Q472 553 469.300 549Z" fill="#ff3a5c"/></g>
<!-- discord -->
<g><circle cx="517" cy="546.800" r="9.300" fill="#5865f2"/><path d="M511.800 543.500Q517 541.500 522.200 543.500Q524.200 547 523.800 550.500Q522 551.700 520.800 551.700L520 550.500H514L513.200 551.700Q512 551.700 510.200 550.500Q509.800 547 511.800 543.500Z" fill="#fff"/><ellipse cx="514.800" cy="547.500" rx="1.200" ry="1.400" fill="#5865f2"/><ellipse cx="519.200" cy="547.500" rx="1.200" ry="1.400" fill="#5865f2"/><circle cx="521.500" cy="552.800" r="5.300" fill="#e8434a"/></g>
<!-- cat app -->
<g><rect x="547" y="538.700" width="17" height="17" rx="3" fill="#7a6446"/><rect x="548.600" y="540.300" width="13.800" height="13.800" rx="2" fill="#5a4830"/><path d="M550.300 541.500L553 544H558L560.700 541.500V552.500H550.300Z" fill="#f0e6cc"/><path d="M557 547.500L558 549.500L560 550L558 550.500L557 552.500L556 550.500L554 550L556 549.500Z" fill="#5a4830"/><circle cx="552.800" cy="548" r=".7" fill="#5a4830"/><circle cx="553" cy="551" r=".5" fill="#5a4830"/></g>
<!-- firealpaca -->
<g><circle cx="594.600" cy="548" r="8.700" fill="#111"/><path d="M587.300 551Q586.500 545 589.500 543.500Q588.500 548 591 553Q589 553.500 587.300 551Z M602 551Q602.800 545 599.800 543.500Q600.800 548 598.300 553Q600.300 553.500 602 551Z" fill="#f06a10"/><path d="M590.800 541.500L591.600 538.800L593 541H596.200L597.600 538.800L598.400 541.500Q599.200 544 598.800 548Q599.300 555 594.600 556.300Q589.900 555 590.400 548Q590 544 590.800 541.500Z" fill="#fff"/><path d="M593 550L596.200 551.600V550L593 551.600Z" fill="#f06a10"/><path d="M592.300 544.500H593.800M595.400 544.500H596.900" stroke="#333" stroke-width=".5"/></g>
<!-- tray -->
<g fill="none" stroke="#fff" stroke-width="1"><path d="M755.600 549.700L760.300 545L765 549.700"/>
<path d="M779.500 546H781.800L785 543V552.500L781.800 549.500H779.500Z" stroke-width=".9"/><path d="M787 545.500Q788.300 547.700 787 550M789.300 544Q791.300 547.700 789.300 551.500" stroke-width=".8" stroke="#ddd"/>
<path d="M806.500 550Q808 544 815.500 543.500M809 551.500Q810 547 815.500 546.500M811.500 552.500Q812 549.500 815.500 549.300" stroke-width=".9" stroke="#aaa"/>
</g>
<circle cx="814.800" cy="552" r="1" fill="#fff"/>
<path d="M829.500 543.700H832.500V545H840.500V546.500H841.500V549H840.500V550.500H831V547.500H829.500Z" fill="#fff"/><rect x="830.300" y="544.500" width="1.400" height="1.600" fill="#333"/>
<g fill="none" stroke="#fff" stroke-width="1.200"><path d="M861.500 550.500L866.500 544.500"/><circle cx="860.300" cy="551.300" r="2.200"/><circle cx="867" cy="544.300" r="2"/><circle cx="864" cy="550.800" r="1.600" stroke-width=".8"/></g>
<path d="M967.800 541H980.300V551H975.700L974 553.300L972.300 551H967.800Z" fill="#fff"/><path d="M970 543.500H978M970 545.500H978M970 547.500H975" stroke="#aaa" stroke-width=".8"/>
</svg>
<div class="t" style="left:519.200px;top:547.500px;font-size:8px;line-height:10px;height:10px;color:#fff;font-weight:bold;letter-spacing:0">6</div>
<!-- small icons overlay -->
<svg id="ic" style="left:0;top:0" width="1000" height="532" viewBox="0 0 1000 532">
<defs>
<g id="hdic"><rect x="-2.400" y="-1.400" width="3.800" height="3.800" fill="#eee" stroke="#222" stroke-width=".9"/><path d="M-1 -2.700H2.800V1" fill="none" stroke="#222" stroke-width="1.200"/><path d="M7.600 -1.900L11.400 1.900M11.400 -1.900L7.600 1.900" stroke="#111" stroke-width="1.200" fill="none"/></g>
<g id="newdoc"><path d="M-3 -3.500H.8L3 -1.300V3.500H-3Z" fill="none" stroke="#333" stroke-width="1"/><path d="M.6 -3.500V-1.100H3" fill="none" stroke="#333" stroke-width=".8"/></g>
<g id="trash"><path d="M-2.800 -1.800H2.800V3.500H-2.800Z" fill="none" stroke="#333" stroke-width="1"/><path d="M-3.800 -2.200H3.800M-1.200 -3.400H1.200" stroke="#333" stroke-width="1" fill="none"/></g>
<g id="folder"><path d="M-4 -3.200H-.8L.2 -2H4V3.500H-4Z" fill="#333"/></g>
<g id="copy"><path d="M-3.800 -3.600H.4V1.600H-3.800Z" fill="none" stroke="#333" stroke-width="1"/><path d="M.4 -1.600H3.800V3.700H-1V1.800" fill="none" stroke="#333" stroke-width="1"/></g>
<g id="gear"><circle r="2.600" fill="none" stroke="#888" stroke-width="1.800"/><path d="M0 -4.600V4.600M-4.600 0H4.600M-3.250 -3.250L3.250 3.250M-3.250 3.250L3.250 -3.250" stroke="#888" stroke-width="1.500"/><circle r="1" fill="#9dd1f6"/></g>
<g id="burst"><path d="M0 -3.600V-2.400M0 3.600V2.400M-3.600 0H-2.400M3.600 0H2.400M-2.550 -2.550L-1.700 -1.700M2.550 2.550L1.700 1.700M-2.550 2.550L-1.700 1.700M2.550 -2.550L1.700 -1.700" stroke="#444" stroke-width=".9"/></g>
<g id="zoomg"><circle cx="-.8" cy="-.8" r="2.600" fill="none" stroke="#333" stroke-width="1"/><path d="M1.200 1.200L3.600 3.600" stroke="#333" stroke-width="1.300"/></g>
</defs>
<!-- panel header icons -->
<use href="#hdic" x="196.400" y="66"/><use href="#hdic" x="196.400" y="169.600"/><use href="#hdic" x="196.400" y="246.200"/><use href="#hdic" x="196.400" y="366.900"/><use href="#hdic" x="196.400" y="464.600"/>
<use href="#hdic" x="985.300" y="66"/><use href="#hdic" x="985.300" y="251"/>
<circle cx="161.500" cy="116" r="4.400" fill="#fff"/><circle cx="161.500" cy="116" r="2.500" fill="#f00"/><circle cx="103" cy="138.400" r="4.400" fill="#fff"/><circle cx="103" cy="138.400" r="2.700" fill="#000"/>
<!-- palette -->
<g fill="none" stroke="#bbb" stroke-width="1.100"><path d="M199 189L202 186L205 189"/><path d="M199 204.500L202 207.500L205 204.500"/></g>
<path d="M53.500 221.500h4l-2 2.300z" fill="#111"/>
<use href="#newdoc" x="69.800" y="224"/><g opacity=".7"><use href="#trash" x="89" y="224"/></g>
<!-- brush control arrows -->
<path d="M196.500 300.800h4l-2 2.300z M196.500 318.500h4l-2 2.300z" fill="#111"/>
<g fill="none" stroke="#555" stroke-width=".9"><path d="M195 337.500L197 335.500L199 337.500"/><path d="M195 344L197 346L199 344"/></g>
<!-- brush list -->
<use href="#gear" x="187" y="384"/>
<g fill="none" stroke="#333" stroke-width="1.100"><path d="M199 385.500L202 382.500L205 385.500"/><path d="M199 423L202 426L205 423"/></g>
<g fill="none" stroke="#333" stroke-width="1"><rect x="32" y="438.300" width="7.600" height="7"/><path d="M32 440.300H39.600"/><rect x="34" y="442.300" width="3.600" height="3" stroke-width=".8"/></g>
<use href="#newdoc" x="59.800" y="441.800"/><use href="#folder" x="79" y="441.800"/><use href="#copy" x="98.200" y="441.800"/><use href="#trash" x="122.600" y="441.800"/>
<!-- color history -->
<g fill="none" stroke="#555" stroke-width=".9"><path d="M200 480.300L202 478.300L204 480.300"/><path d="M200 488L202 490L204 488"/></g>
<use href="#trash" x="35.800" y="505"/><use href="#burst" x="55" y="505"/>
<!-- navigator toolbar -->
<use href="#zoomg" x="810.800" y="84.500"/><path d="M808.800 83.700H811.200M810 82.500V84.900" stroke="#333" stroke-width=".8"/>
<use href="#zoomg" x="830.400" y="84.500"/><path d="M828.400 83.700H830.800" stroke="#333" stroke-width=".8"/>
<g fill="none" stroke="#333" stroke-width="1"><circle cx="849.400" cy="84.500" r="2.200"/><path d="M845.400 82V80.500H847M853.400 82V80.500H851.800M845.400 87V88.500H847M853.400 87V88.500H851.800M846 81L847.700 82.800M852.800 81L851.100 82.800M846 88L847.700 86.200M852.800 88L851.100 86.200" stroke-width=".9"/></g>
<g fill="none" stroke="#333" stroke-width="1.400"><path d="M871.500 83.500Q873 80.800 875.500 81.800Q877.600 83.200 876.600 85.800Q876 87 874.500 87.300"/><path d="M914.100 83.500Q912.600 80.800 910.100 81.800Q908 83.200 909 85.800Q909.600 87 911.100 87.300"/></g>
<path d="M869.600 82.300L873.300 83.700L870.300 86.200Z M916 82.300L912.300 83.700L915.300 86.200Z" fill="#333"/>
<g opacity=".75"><use href="#burst" x="892.800" y="84.500"/></g>
<g fill="none" stroke="#555" stroke-width=".9"><path d="M936.600 80.500V88.500" stroke-dasharray="1.200 .8"/><path d="M935 82.500L932.500 86.800H935Z"/><path d="M938.200 82.500L940.700 86.800H938.200Z" fill="#555"/><path d="M933.500 81.500Q936.600 79.500 939.700 81.500" stroke-width=".8"/></g>
<!-- layer panel -->
<path d="M989.900 285.600h4l-2 2.300z" fill="#111"/>
<g transform="translate(973.800 344.500) scale(1.400)"><use href="#gear"/></g>
<g fill="none" stroke="#c4c4c4" stroke-width="1.100"><path d="M988 338L991 335L994 338"/><path d="M988 485.500L991 488.500L994 485.500"/></g>
<use href="#newdoc" x="811.800" y="504.800"/>
<use href="#newdoc" x="831.200" y="504.800"/><path d="M829.700 503.500H832.700V506.500H829.700Z" fill="none" stroke="#555" stroke-width=".7"/>
<use href="#newdoc" x="850.300" y="504.800"/><path d="M850.300 503V506.800" stroke="#555" stroke-width=".8"/>
<use href="#folder" x="869.400" y="504.800"/><use href="#copy" x="893.700" y="504.800"/>
<path d="M912.900 500.800V505M910.700 503.200L912.900 505.600L915.100 503.200M909.200 506.800H916.600M909.200 508.600H916.600" fill="none" stroke="#333" stroke-width="1.100"/>
<use href="#trash" x="936.600" y="504.800"/>
<!-- canvas corner icons -->
<g><circle cx="765.200" cy="89" r="11.500" fill="#111"/><path d="M754.800 94Q753.500 85 757.500 82Q756.500 87 758 91Q759 95 761 98.500Q757 98 754.800 94Z M775.600 94Q776.900 85 772.900 82Q773.900 87 772.400 91Q771.400 95 769.400 98.500Q773.400 98 775.600 94Z" fill="#f06a10"/><path d="M756 88Q756.500 86 757.500 87L758.500 92Z M774.400 88Q773.900 86 772.900 87L771.900 92Z" fill="#f8a040"/><path d="M759.800 80.500L760.600 77.200L762.800 79.200Q765.200 78.400 767.600 79.200L769.800 77.200L770.600 80.500Q772 83.500 771.300 87.500Q772.600 92 771.600 97Q770 100.200 765.200 100.400Q760.400 100.200 758.800 97Q757.800 92 759.100 87.500Q758.400 83.500 759.800 80.500Z" fill="#fff"/><path d="M762.600 91.200L767.800 93.600V91.200L762.600 93.600Z" fill="#e8641b"/><path d="M761.800 84.200H764.200M766.200 84.200H768.600" stroke="#333" stroke-width=".7"/><path d="M764.300 86.300H766.100M765.200 86.300V88.200M764.200 89H766.200" stroke="#666" stroke-width=".5" fill="none"/></g>
<circle cx="765.200" cy="117.600" r="12.500" fill="#0096fa"/>
</svg>
<div class="t" style="left:756.600px;top:106.500px;font-family:'Liberation Serif',serif;font-size:23px;line-height:24px;height:24px;color:#fff;letter-spacing:0;transform-origin:0 50%;transform:scaleX(1.320)">P</div>
</body></html>
